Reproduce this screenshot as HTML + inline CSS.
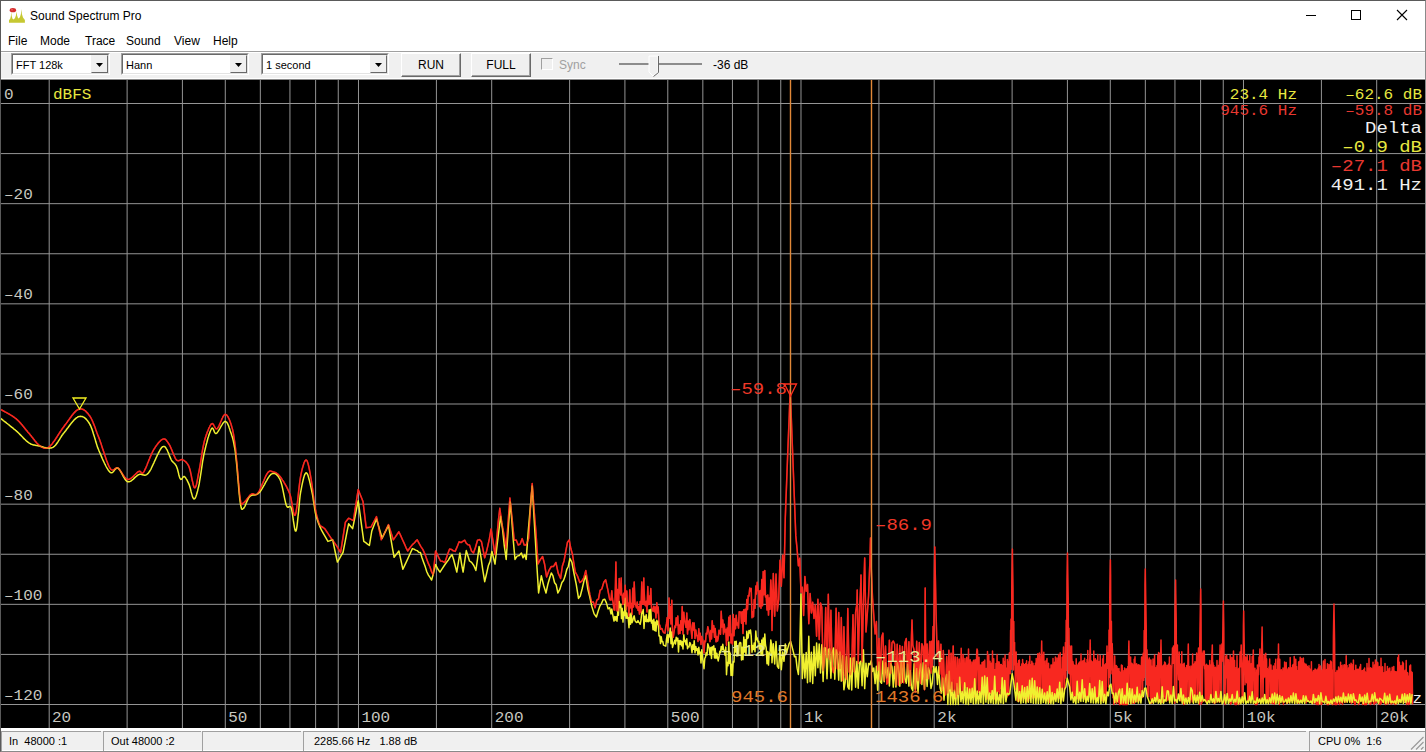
<!DOCTYPE html><html><head><meta charset="utf-8"><style>
*{margin:0;padding:0;box-sizing:border-box}
html,body{width:1426px;height:752px;overflow:hidden;background:#fff;font-family:"Liberation Sans",sans-serif;}
.abs{position:absolute}
.t{position:absolute;white-space:pre;font-size:12px;color:#000;line-height:14px}
.combo{position:absolute;background:#fff;border-top:1px solid #a0a0a0;border-left:1px solid #a0a0a0;border-right:1px solid #fff;border-bottom:1px solid #fff}
.combo .in{position:absolute;left:0;top:0;right:0;bottom:0;border-top:1px solid #696969;border-left:1px solid #696969;border-right:1px solid #e3e3e3;border-bottom:1px solid #e3e3e3}
.arrow{position:absolute;top:1px;bottom:1px;right:1px;width:17px;background:#f0f0f0;border-top:1px solid #f0f0f0;border-left:1px solid #f0f0f0;border-right:1px solid #696969;border-bottom:1px solid #696969}
.btn{position:absolute;background:#f0f0f0;border-top:1px solid #fff;border-left:1px solid #fff;border-right:1px solid #696969;border-bottom:1px solid #696969}
.btn .in{position:absolute;left:0;top:0;right:0;bottom:0;border-right:1px solid #a0a0a0;border-bottom:1px solid #a0a0a0;}
.pl{position:absolute;white-space:pre;font-family:"Liberation Mono",monospace;line-height:1}
</style></head><body>
<div class="abs" style="left:0;top:0;width:1426px;height:752px;border:1px solid #5a5a5a;border-right-color:#8a8a8a;border-bottom-color:#8a8a8a"></div>
<svg class="abs" style="left:0;top:0" width="30" height="30" viewBox="0 0 30 30">
<path d="M9 22.8V20.2L10.3 18.5L10.9 16L11.3 12L11.7 16L12.5 18.8L13.7 19.5L15 18L15.9 15.5L16.5 11.5L17.1 15.5L18 18L18.8 18.4L20 17L20.9 14L21.4 9L21.9 14L23 17.5L24.9 20V22.8Z" fill="#c6c832"/>
<ellipse cx="12.9" cy="10.2" rx="3.2" ry="2.1" fill="#d42c2c"/>
<ellipse cx="12" cy="9.8" rx="1.2" ry="0.8" fill="#ee5a5a"/>
</svg>
<div class="t" style="left:30px;top:9px;font-size:12px">Sound Spectrum Pro</div>
<div class="abs" style="left:1306px;top:15px;width:10px;height:1px;background:#000"></div>
<div class="abs" style="left:1351px;top:10px;width:10px;height:10px;border:1px solid #000"></div>
<svg class="abs" style="left:1396px;top:9px" width="12" height="12" viewBox="0 0 12 12"><path d="M1 1L11 11M11 1L1 11" stroke="#000" stroke-width="1.1"/></svg>
<div class="t" style="left:8px;top:34px">File</div>
<div class="t" style="left:40px;top:34px">Mode</div>
<div class="t" style="left:85px;top:34px">Trace</div>
<div class="t" style="left:126px;top:34px">Sound</div>
<div class="t" style="left:174px;top:34px">View</div>
<div class="t" style="left:213px;top:34px">Help</div>
<div class="abs" style="left:1px;top:51px;width:1424px;height:1px;background:#a0a0a0"></div>
<div class="abs" style="left:1px;top:52px;width:1424px;height:1px;background:#fff"></div>
<div class="abs" style="left:1px;top:53px;width:1424px;height:25px;background:#f0f0f0"></div>
<div class="abs" style="left:1px;top:78px;width:1424px;height:1px;background:#fff"></div>
<div class="abs" style="left:1px;top:79px;width:1424px;height:1px;background:#8a8a8a"></div>
<div class="combo" style="left:11px;top:53px;width:99px;height:22px"><div class="in"></div><div class="arrow"><svg style="position:absolute;left:4px;top:7px" width="8" height="5"><path d="M0 0H7L3.5 4Z" fill="#000"/></svg></div><div class="t" style="left:4px;top:4px;font-size:11px">FFT 128k</div></div>
<div class="combo" style="left:121px;top:53px;width:128px;height:22px"><div class="in"></div><div class="arrow"><svg style="position:absolute;left:4px;top:7px" width="8" height="5"><path d="M0 0H7L3.5 4Z" fill="#000"/></svg></div><div class="t" style="left:4px;top:4px;font-size:11px">Hann</div></div>
<div class="combo" style="left:261px;top:53px;width:128px;height:22px"><div class="in"></div><div class="arrow"><svg style="position:absolute;left:4px;top:7px" width="8" height="5"><path d="M0 0H7L3.5 4Z" fill="#000"/></svg></div><div class="t" style="left:4px;top:4px;font-size:11px">1 second</div></div>
<div class="btn" style="left:401px;top:53px;width:60px;height:24px"><div class="in"></div><div class="t" style="left:0;width:58px;text-align:center;top:4px">RUN</div></div>
<div class="btn" style="left:471px;top:53px;width:60px;height:24px"><div class="in"></div><div class="t" style="left:0;width:58px;text-align:center;top:4px">FULL</div></div>
<div class="abs" style="left:541px;top:58px;width:12px;height:12px;border-top:1px solid #a0a0a0;border-left:1px solid #a0a0a0;border-right:1px solid #fff;border-bottom:1px solid #fff;background:#f0f0f0"></div>
<div class="t" style="left:559px;top:58px;color:#a0a0a0">Sync</div>
<div class="abs" style="left:619px;top:63px;width:83px;height:2px;background:#8c8c8c"></div>
<svg class="abs" style="left:648px;top:55px" width="13" height="23" viewBox="0 0 13 23">
<path d="M1 1H10V17L5 21L1 17Z" fill="#f0f0f0" stroke="#fff"/>
<path d="M10.5 1V17.5L5.5 21.5" stroke="#696969" fill="none"/>
</svg>
<div class="t" style="left:713px;top:58px">-36 dB</div>
<svg width="1424" height="648" viewBox="1 80 1424 648" style="position:absolute;left:1px;top:80px;display:block">
<rect x="1" y="80" width="1424" height="648" fill="#000"/>
<path d="M49.20 80V728M127.12 80V728M182.41 80V728M225.29 80V728M260.33 80V728M289.95 80V728M315.61 80V728M338.25 80V728M358.49 80V728M436.41 80V728M491.70 80V728M569.62 80V728M624.91 80V728M667.79 80V728M702.83 80V728M732.45 80V728M758.11 80V728M780.75 80V728M800.99 80V728M878.91 80V728M934.20 80V728M1012.12 80V728M1067.41 80V728M1110.29 80V728M1145.33 80V728M1174.95 80V728M1200.61 80V728M1223.25 80V728M1243.49 80V728M1321.41 80V728M1376.70 80V728M1 103.50H1425M1 153.58H1425M1 203.67H1425M1 253.75H1425M1 303.83H1425M1 353.91H1425M1 404.00H1425M1 454.08H1425M1 504.16H1425M1 554.25H1425M1 604.33H1425M1 654.41H1425M1 704.50H1425" stroke="#949494" stroke-width="1" fill="none"/>
<text x="4" y="99" font-family="Liberation Mono, monospace" font-size="16" fill="#c8c8c0" transform="matrix(1 0 0 0.88 0 11.88)">0</text>
<text x="4" y="199" font-family="Liberation Mono, monospace" font-size="16" fill="#c8c8c0" transform="matrix(1 0 0 0.88 0 23.88)">&#8211;20</text>
<text x="4" y="299" font-family="Liberation Mono, monospace" font-size="16" fill="#c8c8c0" transform="matrix(1 0 0 0.88 0 35.88)">&#8211;40</text>
<text x="4" y="399" font-family="Liberation Mono, monospace" font-size="16" fill="#c8c8c0" transform="matrix(1 0 0 0.88 0 47.88)">&#8211;60</text>
<text x="4" y="500" font-family="Liberation Mono, monospace" font-size="16" fill="#c8c8c0" transform="matrix(1 0 0 0.88 0 60.00)">&#8211;80</text>
<text x="4" y="600" font-family="Liberation Mono, monospace" font-size="16" fill="#c8c8c0" transform="matrix(1 0 0 0.88 0 72.00)">&#8211;100</text>
<text x="4" y="700" font-family="Liberation Mono, monospace" font-size="16" fill="#c8c8c0" transform="matrix(1 0 0 0.88 0 84.00)">&#8211;120</text>
<text x="53" y="99" font-family="Liberation Mono, monospace" font-size="16" fill="#e8e840" transform="matrix(1 0 0 0.88 0 11.88)">dBFS</text>
<text x="52.0" y="722" font-family="Liberation Mono, monospace" font-size="16" fill="#c8c8c0" transform="matrix(1 0 0 0.88 0 86.64)">20</text>
<text x="228.2" y="722" font-family="Liberation Mono, monospace" font-size="16" fill="#c8c8c0" transform="matrix(1 0 0 0.88 0 86.64)">50</text>
<text x="361.4" y="722" font-family="Liberation Mono, monospace" font-size="16" fill="#c8c8c0" transform="matrix(1 0 0 0.88 0 86.64)">100</text>
<text x="494.7" y="722" font-family="Liberation Mono, monospace" font-size="16" fill="#c8c8c0" transform="matrix(1 0 0 0.88 0 86.64)">200</text>
<text x="670.8" y="722" font-family="Liberation Mono, monospace" font-size="16" fill="#c8c8c0" transform="matrix(1 0 0 0.88 0 86.64)">500</text>
<text x="804.1" y="722" font-family="Liberation Mono, monospace" font-size="16" fill="#c8c8c0" transform="matrix(1 0 0 0.88 0 86.64)">1k</text>
<text x="937.3" y="722" font-family="Liberation Mono, monospace" font-size="16" fill="#c8c8c0" transform="matrix(1 0 0 0.88 0 86.64)">2k</text>
<text x="1113.5" y="722" font-family="Liberation Mono, monospace" font-size="16" fill="#c8c8c0" transform="matrix(1 0 0 0.88 0 86.64)">5k</text>
<text x="1246.8" y="722" font-family="Liberation Mono, monospace" font-size="16" fill="#c8c8c0" transform="matrix(1 0 0 0.88 0 86.64)">10k</text>
<text x="1380.0" y="722" font-family="Liberation Mono, monospace" font-size="16" fill="#c8c8c0" transform="matrix(1 0 0 0.88 0 86.64)">20k</text>
<text x="1422" y="703" font-family="Liberation Mono, monospace" font-size="16" fill="#f0f0f0" text-anchor="end" transform="matrix(1 0 0 0.88 0 84.36)">Hz</text>
<path d="M0.0 409.1L0.3 409.3L0.6 409.4L0.9 409.6L1.3 409.8L1.6 410.0L2.1 410.2L2.5 410.5L3.0 410.7L3.4 411.0L3.9 411.2L4.4 411.5L5.0 411.8L5.5 412.1L6.1 412.4L6.6 412.7L7.2 413.0L7.8 413.3L8.4 413.7L9.0 414.0L9.5 414.3L10.1 414.7L10.7 415.0L11.3 415.4L11.9 415.7L12.4 416.1L13.0 416.5L13.5 416.8L14.0 417.2L14.6 417.6L15.1 418.0L15.5 418.3L16.0 418.7L16.6 419.2L17.1 419.7L17.7 420.2L18.2 420.7L18.8 421.3L19.3 421.8L19.8 422.4L20.4 423.0L20.9 423.6L21.4 424.2L21.9 424.7L22.4 425.3L22.9 426.0L23.4 426.6L23.9 427.2L24.4 427.8L24.9 428.4L25.3 429.0L25.8 429.6L26.3 430.2L26.8 430.7L27.3 431.3L27.7 431.9L28.2 432.5L28.7 433.0L29.2 433.6L29.8 434.3L30.3 434.9L30.8 435.6L31.4 436.3L31.9 436.9L32.4 437.6L33.0 438.3L33.5 438.9L34.0 439.6L34.5 440.2L35.0 440.9L35.5 441.5L36.0 442.1L36.5 442.7L37.0 443.2L37.5 443.7L38.0 444.2L38.5 444.7L38.9 445.1L39.4 445.5L39.9 445.8L40.4 446.2L41.0 446.5L41.5 446.8L41.9 447.1L42.4 447.4L42.9 447.6L43.4 447.9L43.8 448.0L44.3 448.2L44.7 448.3L45.2 448.3L45.7 448.3L46.2 448.3L46.7 448.2L47.2 448.0L47.7 447.8L48.3 447.4L48.9 447.1L49.5 446.6L49.9 446.2L50.4 445.8L50.8 445.3L51.3 444.8L51.8 444.3L52.3 443.7L52.7 443.0L53.2 442.3L53.7 441.6L54.3 440.9L54.8 440.2L55.3 439.4L55.8 438.6L56.4 437.8L56.9 437.0L57.4 436.1L58.0 435.3L58.5 434.5L59.0 433.6L59.6 432.8L60.1 432.0L60.6 431.2L61.2 430.4L61.7 429.6L62.2 428.8L62.8 428.1L63.3 427.4L63.8 426.7L64.3 426.0L64.8 425.3L65.4 424.6L65.9 423.9L66.4 423.2L66.9 422.4L67.5 421.7L68.0 420.9L68.5 420.2L69.1 419.4L69.6 418.7L70.1 417.9L70.7 417.2L71.2 416.5L71.7 415.8L72.2 415.1L72.8 414.5L73.3 413.8L73.8 413.2L74.3 412.6L74.8 412.1L75.3 411.6L75.8 411.1L76.3 410.7L76.8 410.3L77.3 410.0L77.7 409.7L78.2 409.5L78.8 409.3L79.3 409.1L79.9 409.0L80.5 409.0L81.0 409.0L81.5 409.0L82.1 409.1L82.6 409.3L83.1 409.5L83.6 409.7L84.1 410.0L84.6 410.4L85.1 410.7L85.6 411.1L86.1 411.6L86.6 412.1L87.0 412.6L87.5 413.1L88.0 413.7L88.5 414.3L88.9 414.9L89.4 415.5L89.9 416.3L90.5 417.1L91.0 418.0L91.5 419.0L92.0 420.0L92.5 421.1L93.0 422.2L93.4 423.4L93.9 424.6L94.4 425.8L94.9 427.1L95.4 428.4L95.8 429.7L96.3 431.0L96.8 432.4L97.3 433.7L97.8 435.1L98.4 436.5L98.9 437.9L99.4 439.1L99.9 440.5L100.4 441.9L100.9 443.3L101.4 444.9L101.9 446.4L102.4 448.0L102.9 449.6L103.5 451.2L104.0 452.8L104.5 454.4L105.1 456.0L105.6 457.6L106.1 459.1L106.6 460.5L107.2 461.9L107.7 463.2L108.1 464.4L108.6 465.5L109.1 466.6L109.6 467.4L110.0 468.2L110.6 469.0L111.1 469.6L111.7 469.9L112.2 470.1L112.7 470.1L113.2 469.9L113.6 469.7L114.1 469.4L114.5 469.1L115.0 468.7L115.5 468.4L116.0 468.1L116.4 467.9L116.9 467.9L117.5 467.9L118.0 468.2L118.5 468.6L118.9 469.0L119.4 469.5L119.9 470.2L120.4 470.8L120.9 471.6L121.4 472.3L121.9 473.1L122.4 473.9L122.9 474.7L123.4 475.5L124.0 476.2L124.5 476.9L125.0 477.5L125.5 478.1L126.1 478.6L126.6 479.0L127.2 479.2L127.7 479.4L128.2 479.4L128.7 479.4L129.2 479.2L129.7 479.0L130.3 478.7L130.8 478.4L131.3 478.0L131.9 477.5L132.5 477.1L133.0 476.6L133.6 476.1L134.1 475.5L134.6 475.0L135.2 474.5L135.7 474.0L136.2 473.5L136.7 473.0L137.1 472.6L137.6 472.2L138.0 471.9L138.4 471.6L138.8 471.4L139.6 471.2L140.2 471.4L140.7 471.8L141.1 472.4L141.5 472.9L141.9 473.3L142.3 473.4L142.9 473.0L143.6 472.2L144.0 471.6L144.4 470.8L144.8 469.9L145.3 468.9L145.8 467.9L146.3 466.7L146.8 465.5L147.3 464.2L147.8 462.8L148.4 461.5L148.9 460.1L149.5 458.8L150.0 457.4L150.6 456.1L151.1 454.9L151.6 453.7L152.2 452.6L152.7 451.5L153.2 450.6L153.7 449.7L154.2 448.9L154.8 448.0L155.3 447.2L155.8 446.4L156.3 445.7L156.9 444.9L157.4 444.2L157.9 443.5L158.5 442.9L159.0 442.2L159.5 441.7L160.0 441.2L160.5 440.7L161.0 440.2L161.5 439.9L161.9 439.6L162.4 439.3L162.8 439.1L163.4 438.9L164.0 438.9L164.6 439.0L165.1 439.2L165.6 439.6L166.1 440.0L166.6 440.6L167.0 441.2L167.5 441.9L168.0 442.6L168.6 443.5L169.1 444.3L169.6 445.1L170.1 446.1L170.6 447.2L171.1 448.4L171.7 449.7L172.2 451.0L172.7 452.4L173.3 453.7L173.8 455.0L174.4 456.2L174.9 457.3L175.4 458.3L175.9 459.1L176.4 459.8L177.0 460.3L177.5 460.6L178.1 460.7L178.6 460.7L179.1 460.5L179.7 460.3L180.2 460.1L180.7 459.8L181.2 459.7L181.7 459.6L182.3 459.6L182.8 459.8L183.3 460.1L183.9 460.4L184.4 460.8L184.9 461.2L185.5 461.6L186.0 462.1L186.5 462.7L187.1 463.3L187.6 464.1L188.1 464.9L188.6 465.9L189.1 467.0L189.6 468.5L190.2 470.5L190.7 472.8L191.2 475.2L191.7 477.8L192.2 480.3L192.8 482.6L193.2 484.6L193.7 486.3L194.2 487.4L194.7 487.8L195.3 487.5L195.8 486.4L196.4 484.7L196.9 482.4L197.4 479.9L197.9 477.1L198.4 474.2L199.0 471.3L199.5 468.6L200.0 465.9L200.5 462.9L201.0 459.8L201.5 456.6L202.0 453.3L202.5 450.1L203.1 447.0L203.7 444.1L204.3 441.5L204.7 439.9L205.2 438.3L205.7 436.7L206.2 435.1L206.8 433.6L207.3 432.1L207.9 430.7L208.4 429.4L208.9 428.1L209.5 427.0L210.0 426.0L210.5 425.2L211.0 424.4L211.5 423.9L212.1 423.6L212.6 423.7L213.1 424.1L213.6 424.8L214.0 425.6L214.5 426.5L215.0 427.4L215.5 428.2L216.0 428.7L216.5 428.9L217.1 428.7L217.6 428.2L218.0 427.6L218.6 426.7L219.1 425.6L219.6 424.4L220.2 423.1L220.7 421.8L221.3 420.5L221.8 419.2L222.4 418.0L222.9 416.9L223.5 415.9L224.0 415.2L224.5 414.7L225.0 414.4L225.6 414.4L226.2 414.6L226.8 415.1L227.3 415.8L227.9 416.7L228.4 417.7L229.0 418.8L229.5 420.0L230.0 421.3L230.5 422.7L231.0 424.1L231.4 425.5L232.0 427.6L232.6 429.6L233.0 431.8L233.5 434.2L233.9 436.9L234.4 440.0L234.9 443.7L235.4 447.9L235.9 452.6L236.4 458.2L237.0 464.5L237.6 471.2L238.1 477.9L238.7 484.3L239.2 490.2L239.7 495.1L240.2 498.9L240.8 502.4L241.2 504.2L241.6 504.6L242.0 504.3L242.6 503.5L243.4 502.9L243.8 502.7L244.2 502.4L244.6 501.9L245.1 501.4L245.6 500.8L246.1 500.2L246.7 499.5L247.2 498.8L247.8 498.1L248.3 497.4L248.9 496.7L249.4 496.0L249.9 495.4L250.4 494.9L250.9 494.5L251.4 494.1L252.0 493.8L252.5 493.7L253.0 493.8L253.5 493.9L254.0 494.2L254.5 494.4L255.0 494.6L255.5 494.7L256.0 494.7L256.6 494.4L257.2 494.0L257.8 493.3L258.2 492.7L258.7 491.9L259.2 491.0L259.7 490.0L260.2 489.0L260.7 487.8L261.2 486.6L261.8 485.3L262.3 484.0L262.9 482.8L263.4 481.5L264.0 480.2L264.5 479.0L265.0 477.8L265.5 476.7L266.0 475.7L266.4 474.8L266.9 474.0L267.3 473.4L267.9 472.5L268.5 471.9L269.1 471.5L269.6 471.2L270.0 471.1L270.5 471.1L270.9 471.1L271.4 471.3L271.8 471.5L272.3 471.6L272.9 471.8L273.4 471.9L273.8 472.0L274.3 472.2L274.8 472.4L275.3 472.5L275.8 472.8L276.3 473.0L276.8 473.4L277.3 473.7L277.8 474.2L278.4 474.7L278.9 475.2L279.5 475.9L280.1 476.6L280.6 477.2L281.0 477.8L281.5 478.5L282.0 479.3L282.5 480.1L283.1 480.9L283.6 481.7L284.1 482.6L284.7 483.5L285.2 484.5L285.8 485.4L286.3 486.4L286.8 487.4L287.3 488.4L287.8 489.4L288.3 490.4L288.8 491.5L289.2 492.5L289.6 493.5L290.3 495.5L290.9 497.9L291.4 500.7L291.9 503.5L292.4 506.4L292.9 509.1L293.3 511.4L293.8 513.4L294.2 514.7L294.7 515.3L295.2 515.0L295.7 513.6L296.2 511.3L296.7 508.1L297.2 504.3L297.7 500.1L298.2 495.6L298.7 491.0L299.2 486.6L299.7 482.5L300.2 478.9L300.7 476.0L301.2 473.5L301.7 471.2L302.2 469.0L302.8 467.0L303.3 465.2L303.8 463.6L304.3 462.3L304.8 461.2L305.3 460.5L305.8 460.0L306.3 460.0L306.9 460.5L307.4 461.7L308.0 463.4L308.5 465.5L309.1 468.0L309.6 470.7L310.1 473.5L310.6 476.4L311.1 479.1L311.6 482.3L312.1 485.9L312.6 489.7L313.1 493.6L313.6 497.5L314.1 501.3L314.6 504.8L315.1 507.9L315.6 510.4L316.1 512.8L316.6 515.1L317.2 517.2L317.7 519.2L318.3 521.0L318.8 522.7L319.4 524.1L319.9 525.4L321.5 526.5L323.1 527.5L324.7 528.6L326.3 531.0L327.9 533.4L329.5 535.8L331.1 538.2L333.5 541.4L335.8 544.6L337.4 547.2L339.0 549.9L340.6 552.5L343.0 537.4L345.4 522.2L347.0 520.2L348.6 518.2L351.0 519.4L353.4 520.6L355.0 510.2L356.6 499.9L358.2 489.5L359.8 493.5L361.4 497.5L363.0 501.5L366.2 527.8L367.8 527.5L369.4 527.3L371.0 527.0L372.8 523.5L374.7 520.1L376.5 516.6L378.1 524.3L379.7 532.1L381.3 539.8L383.1 536.0L384.9 532.2L386.7 528.4L388.5 524.6L390.1 529.7L391.7 534.7L393.3 539.8L395.2 537.1L397.0 534.5L398.9 531.8L400.7 535.6L402.4 539.5L404.2 543.4L405.9 547.3L407.7 551.0L410.0 547.7L412.4 544.6L414.0 543.2L415.6 541.4L417.2 539.8L419.1 543.4L420.9 546.6L422.8 549.4L424.7 553.6L426.5 558.4L428.4 563.7L430.0 567.0L431.6 572.0L433.2 574.9L435.6 551.0L437.2 554.2L438.9 557.9L440.5 561.0L442.6 561.3L444.8 562.5L446.4 558.0L448.0 553.2L449.6 549.0L451.5 549.4L453.3 550.8L455.2 551.4L457.1 546.9L459.1 541.8L461.0 542.6L462.8 541.3L464.7 540.2L466.3 543.3L467.9 544.7L469.5 545.0L471.5 550.9L473.5 553.0L475.5 547.3L477.5 540.2L479.5 539.6L481.5 541.8L484.7 557.8L486.3 552.3L487.9 545.6L489.5 538.2L491.1 529.0L493.1 542.1L495.0 554.6L496.6 540.3L498.2 522.2L499.8 508.3L501.8 522.9L503.8 533.8L506.2 548.2L508.0 523.5L509.9 497.9L512.0 517.8L514.2 540.2L516.2 539.9L518.2 545.0L520.2 544.1L522.2 538.6L524.2 545.1L526.2 545.0L528.6 538.6L530.4 508.2L532.2 483.6L534.1 510.4L536.0 533.0L538.0 564.0L540.3 559.6L542.6 556.5L544.6 564.3L546.6 577.0L549.0 570.3L551.3 566.5L553.6 566.4L555.9 562.5L558.2 573.1L560.6 578.5L562.4 566.0L564.1 560.7L565.9 550.6L567.5 542.1L569.2 540.0L570.9 548.8L572.5 554.5L575.2 571.8L577.5 576.0L579.8 582.5L581.8 581.2L583.8 577.9L585.8 570.5L587.8 582.5L589.8 594.4L591.6 602.3L593.3 601.9L595.1 607.7L596.8 600.1L598.5 599.0L600.1 590.4L601.8 589.0L603.8 582.3L605.7 579.8L607.7 589.1L609.7 599.7L611.0 600.1L611.8 590.7L612.5 599.0L613.2 603.1L614.0 609.7L614.8 610.0L615.5 582.0L615.9 562.0L616.2 579.5L617.0 611.0L617.8 589.4L618.5 611.1L619.2 578.4L620.0 591.4L620.8 594.9L621.2 578.0L621.5 593.0L622.2 595.4L623.0 604.4L623.8 593.2L624.5 603.1L625.2 585.3L626.0 609.5L626.8 591.0L627.5 605.7L628.2 603.3L629.0 616.3L629.8 589.8L630.5 607.7L631.2 603.6L632.0 614.3L632.8 588.3L633.5 606.9L634.2 582.1L635.0 603.2L635.8 605.4L636.5 607.8L637.2 602.1L638.0 610.3L638.8 606.7L639.5 614.1L640.2 601.4L641.0 612.2L641.8 582.1L642.5 603.4L643.2 604.2L643.8 578.0L644.0 588.0L644.8 604.6L645.5 605.6L646.2 601.2L647.0 612.0L647.8 586.6L648.5 604.4L649.2 596.1L650.0 603.7L650.8 588.5L651.5 607.3L652.2 609.9L653.0 611.2L653.8 606.2L654.5 611.7L655.2 607.0L656.0 617.9L656.8 602.8L657.5 612.8L658.2 607.1L659.0 624.9L659.8 625.2L660.5 629.2L661.2 628.6L662.0 628.8L662.8 631.2L663.5 632.5L664.2 632.8L665.0 633.2L665.8 627.0L666.5 623.7L667.2 617.5L668.0 630.7L668.8 609.6L669.0 598.0L669.5 618.3L670.2 606.6L671.0 624.0L671.8 600.2L672.5 633.2L673.2 637.3L674.0 632.3L674.8 626.1L675.5 627.4L676.2 617.7L677.0 625.0L677.8 616.1L678.5 633.9L679.2 625.1L680.0 633.5L680.8 620.7L681.5 630.1L682.2 606.5L683.0 633.9L683.8 612.2L684.5 620.3L685.2 622.6L686.0 627.3L686.8 613.0L687.5 634.1L688.2 621.0L689.0 629.8L689.8 619.6L690.5 624.4L691.2 630.4L692.0 638.3L692.8 622.8L693.5 630.0L694.2 623.0L695.0 638.4L695.8 629.9L696.5 635.6L697.2 635.6L698.0 641.5L698.8 628.8L699.5 639.8L700.2 633.3L701.0 644.5L701.8 636.6L702.5 639.4L703.2 642.1L704.0 653.0L704.8 641.0L705.5 641.8L706.2 633.3L707.0 634.0L707.8 626.7L708.5 630.0L709.2 633.1L710.0 641.6L710.8 630.6L711.5 638.9L712.2 620.7L713.0 632.0L713.8 625.7L714.5 637.2L715.2 628.5L716.0 641.8L716.8 636.6L717.5 641.1L718.2 638.4L719.0 630.2L719.8 632.5L720.5 634.3L721.2 611.3L722.0 627.1L722.8 620.1L723.5 634.1L724.2 624.2L725.0 631.9L725.8 629.4L726.5 645.3L727.2 628.0L728.0 640.2L728.8 617.2L729.5 635.6L730.2 615.6L731.0 643.0L731.8 634.2L732.5 644.1L733.2 614.5L734.0 635.7L734.8 618.8L735.5 628.8L736.2 615.2L737.0 624.9L737.8 623.0L738.5 628.1L739.2 611.8L740.0 611.9L740.8 612.3L741.5 623.3L742.2 611.5L743.0 633.5L743.8 609.8L744.5 621.2L745.2 609.3L746.0 623.9L746.8 599.5L747.5 609.5L748.2 595.6L749.0 595.9L749.8 587.9L750.5 590.9L751.2 588.5L752.0 617.7L752.8 611.7L753.5 616.8L754.2 599.6L755.0 608.2L755.8 586.1L756.5 593.9L757.2 582.3L758.0 590.7L758.8 591.2L759.5 606.6L760.2 590.6L761.0 608.3L761.8 579.6L762.5 605.8L763.2 571.5L764.0 594.8L764.8 570.6L765.5 596.9L766.2 595.6L767.0 609.9L767.8 595.1L768.5 615.1L769.2 598.1L770.0 609.2L770.8 580.0L771.5 592.2L772.0 630.6L773.3 573.4L774.7 616.3L776.0 574.0L777.3 611.0L778.7 599.3L780.0 560.3L781.3 586.3L782.7 555.3L784.0 577.8L785.3 517.4L786.6 483.1L787.9 448.8L789.3 414.6L790.2 390.0L790.6 399.6L791.9 433.7L793.2 467.8L794.5 501.9L795.8 535.9L797.1 549.2L798.4 565.8L799.7 558.3L801.0 592.1L802.3 587.2L803.6 615.5L804.9 576.5L806.2 591.2L807.5 584.5L808.8 623.8L810.1 593.6L811.4 612.9L812.7 602.2L814.0 618.4L815.3 605.1L816.6 636.3L817.9 599.3L819.2 639.6L820.5 602.9L821.8 607.5L823.1 670.7L824.4 659.2L825.7 607.4L827.0 657.4L828.3 594.3L829.6 659.2L830.9 610.3L832.2 666.3L833.5 672.5L834.8 665.4L836.1 608.3L837.4 668.7L838.7 612.6L840.0 668.7L841.3 617.4L842.6 680.4L843.9 626.8L845.2 675.3L846.5 678.9L847.8 608.4L849.1 671.6L850.4 674.8L851.7 668.3L853.0 614.7L854.3 671.7L855.6 612.4L856.9 603.9L857.2 590.0L858.2 663.4L859.5 610.8L860.8 583.9L861.0 575.0L862.1 661.7L863.4 602.5L864.7 558.0L864.7 559.1L866.0 631.9L867.3 613.7L868.6 595.5L869.9 561.1L870.5 538.0L871.2 566.9L872.5 597.5L873.8 615.7L875.1 633.9L876.4 621.5L877.7 670.3L879.0 638.4L880.3 680.0L881.6 637.3L882.9 633.1L884.2 680.5L885.5 646.0L886.8 684.1L888.1 682.3L889.4 640.3L890.7 673.2L892.0 642.6L893.3 641.0L894.6 644.0L895.9 685.2L897.2 644.3L898.5 685.0L899.8 645.6L901.1 683.3L902.4 646.5L903.7 682.7L905.0 642.7L906.3 638.5L907.6 674.9L908.9 641.7L910.2 685.4L911.5 635.8L912.0 620.0L912.8 645.3L914.1 650.0L915.4 692.2L916.7 641.3L918.0 680.8L919.3 642.6L920.6 683.5L921.9 643.7L923.2 647.1L924.5 689.7L925.2 588.0L925.8 678.7L927.1 643.9L928.4 678.6L929.7 641.6L931.0 672.9L931.4 641.2L932.3 666.8L933.1 626.6L933.6 658.2L934.8 547.0L934.8 549.7L936.1 615.1L937.2 657.0L937.3 643.1L938.1 651.0L938.5 640.9L939.7 674.3L940.9 644.3L942.1 690.3L943.3 650.6L944.4 682.9L945.6 694.8L946.7 656.4L947.8 693.1L948.9 650.3L950.0 689.0L951.1 653.2L952.1 691.5L953.2 646.0L954.2 690.7L955.2 656.9L956.3 697.1L957.3 657.6L958.3 694.5L959.2 659.1L960.2 689.7L961.2 648.2L962.1 693.2L963.1 654.6L964.0 694.4L964.9 658.5L965.8 688.1L966.7 657.3L967.6 694.7L968.5 649.1L969.3 698.0L970.2 659.8L971.0 695.6L971.9 662.0L972.7 697.4L973.5 660.2L974.3 696.8L975.1 659.7L975.9 692.5L976.7 652.1L977.0 649.0L977.5 650.8L978.3 692.4L979.0 657.2L979.8 698.3L980.5 664.9L981.2 697.5L982.0 662.6L982.7 694.3L983.4 661.6L984.1 694.8L984.8 660.0L985.5 696.7L986.1 668.5L986.8 699.2L987.5 651.4L988.1 697.9L988.8 655.2L989.4 693.8L990.0 661.3L990.7 693.4L991.3 663.2L991.9 695.8L992.5 651.1L993.1 697.8L993.7 658.8L994.3 699.1L994.8 669.8L995.4 696.7L996.0 663.6L996.5 691.4L997.1 654.4L997.6 695.6L998.2 661.7L998.7 691.6L999.2 662.0L999.7 695.6L1000.3 664.5L1000.8 688.6L1001.3 664.6L1001.8 697.8L1002.3 665.7L1002.8 693.3L1003.2 658.2L1003.7 694.6L1004.2 662.0L1004.6 693.3L1005.1 655.1L1005.6 695.2L1006.0 694.9L1006.5 667.9L1006.9 697.0L1007.3 659.5L1007.8 693.2L1008.2 662.3L1008.6 695.6L1009.0 663.1L1009.3 653.0L1009.4 659.8L1009.8 652.6L1010.2 673.8L1010.6 630.2L1010.8 646.0L1011.0 619.0L1011.4 669.2L1011.8 582.4L1012.2 558.4L1012.4 549.0L1012.6 563.6L1013.0 587.6L1013.4 670.0L1013.8 621.4L1014.2 664.8L1014.6 642.6L1014.6 649.2L1015.0 655.0L1015.4 689.3L1015.8 665.0L1016.2 652.0L1016.2 654.2L1016.6 674.2L1017.0 663.3L1017.4 700.9L1017.8 673.1L1018.2 701.1L1018.6 660.8L1019.0 699.4L1019.4 660.1L1019.8 701.0L1020.2 667.1L1020.6 696.2L1021.0 666.5L1021.4 700.5L1021.8 664.1L1022.2 697.7L1022.6 659.6L1023.0 697.6L1023.4 663.4L1023.8 697.6L1024.2 664.7L1024.6 698.2L1025.0 664.6L1025.4 692.6L1025.8 663.5L1026.2 692.5L1026.6 660.7L1027.0 701.7L1027.4 666.8L1027.8 700.2L1028.2 664.6L1028.6 700.8L1029.0 661.7L1029.4 698.1L1029.8 656.0L1030.2 698.4L1030.6 670.3L1031.0 664.8L1031.4 696.6L1031.8 661.2L1032.2 665.7L1032.6 698.0L1033.0 663.2L1033.4 698.0L1033.8 666.5L1034.2 697.5L1034.6 666.1L1035.0 695.8L1035.4 663.2L1035.8 693.2L1036.2 658.4L1036.6 695.9L1037.0 660.8L1037.4 695.5L1037.8 653.8L1038.2 697.1L1038.6 661.1L1039.0 692.9L1039.4 653.0L1039.8 693.1L1040.2 660.5L1040.6 697.7L1041.0 656.7L1041.4 653.8L1041.7 641.0L1041.8 648.2L1042.2 662.1L1042.6 696.3L1043.0 655.4L1043.4 697.8L1043.8 652.2L1044.2 696.1L1044.6 661.2L1045.0 696.1L1045.4 666.3L1045.8 697.3L1046.2 660.6L1046.6 696.9L1047.0 658.5L1047.4 696.3L1047.8 671.1L1048.2 701.4L1048.6 663.2L1049.0 700.7L1049.4 669.0L1049.8 702.6L1050.2 669.5L1050.6 702.2L1051.0 664.9L1051.4 699.5L1051.8 664.9L1052.2 699.8L1052.6 696.9L1053.0 658.6L1053.4 699.5L1053.8 667.5L1054.2 698.2L1054.6 662.3L1055.0 697.5L1055.4 657.1L1055.8 699.8L1056.2 666.4L1056.6 696.9L1057.0 657.9L1057.4 697.3L1057.8 662.6L1058.2 698.2L1058.6 654.5L1059.0 698.6L1059.4 668.4L1059.8 697.4L1060.2 652.7L1060.6 699.0L1061.0 699.4L1061.4 668.9L1061.8 699.9L1062.2 657.2L1062.6 697.0L1063.0 662.2L1063.4 649.8L1063.5 647.0L1063.8 664.2L1064.2 662.9L1064.6 689.4L1065.0 653.8L1065.3 657.0L1065.4 642.6L1065.8 677.9L1066.2 620.2L1066.6 670.2L1067.0 580.4L1067.4 556.4L1067.5 553.0L1067.8 573.6L1068.2 597.6L1068.6 673.0L1069.0 628.2L1069.4 673.8L1069.8 650.6L1070.0 646.0L1070.2 654.8L1070.6 692.3L1071.0 660.8L1071.4 653.8L1071.6 646.0L1071.8 658.2L1072.2 662.5L1072.6 698.2L1073.0 661.8L1073.4 695.8L1073.8 664.6L1074.2 692.3L1074.6 666.5L1075.0 701.3L1075.4 665.6L1075.8 699.0L1076.2 658.7L1076.6 698.2L1077.0 668.4L1077.4 698.6L1077.8 664.9L1078.2 698.7L1078.6 663.5L1079.0 700.2L1079.4 662.3L1079.8 696.1L1080.2 661.7L1080.6 698.6L1081.0 654.1L1081.4 697.5L1081.8 662.6L1082.2 698.1L1082.6 661.0L1083.0 696.4L1083.4 664.2L1083.8 660.4L1084.2 696.2L1084.6 658.3L1085.0 699.2L1085.4 663.0L1085.8 694.8L1086.2 663.9L1086.6 696.6L1087.0 659.4L1087.4 696.1L1087.8 650.4L1088.2 695.5L1088.6 664.3L1089.0 697.0L1089.4 662.5L1089.8 657.8L1090.2 640.0L1090.2 642.2L1090.6 660.8L1091.0 696.4L1091.4 660.9L1091.8 699.0L1092.2 662.2L1092.6 697.9L1093.0 661.8L1093.4 699.3L1093.8 650.9L1094.2 699.2L1094.6 665.3L1095.0 697.4L1095.4 658.8L1095.8 696.5L1096.2 660.3L1096.6 696.9L1097.0 663.9L1097.4 699.7L1097.8 654.5L1098.2 699.8L1098.6 661.9L1099.0 696.2L1099.4 661.5L1099.8 696.1L1100.2 655.5L1100.6 699.3L1101.0 666.9L1101.4 700.2L1101.8 669.3L1102.2 698.6L1102.6 659.0L1103.0 701.0L1103.4 655.6L1103.8 699.9L1104.2 664.8L1104.6 698.8L1105.0 664.9L1105.4 701.7L1105.8 663.7L1106.2 697.2L1106.6 663.8L1107.0 646.0L1107.0 648.2L1107.4 668.2L1107.8 658.8L1107.9 656.0L1108.2 652.4L1108.6 687.1L1109.0 630.0L1109.4 677.5L1109.8 593.4L1110.2 569.4L1110.4 560.0L1110.6 574.6L1111.0 673.7L1111.4 621.2L1111.8 669.8L1112.2 643.6L1112.3 647.0L1112.6 654.8L1113.0 697.8L1113.4 670.6L1113.8 704.5L1114.2 670.6L1114.6 658.8L1114.7 656.0L1115.0 673.2L1115.4 669.1L1115.8 702.2L1116.2 665.6L1116.6 703.5L1117.0 666.6L1117.4 701.0L1117.8 668.7L1118.2 699.0L1118.6 702.2L1119.0 668.5L1119.4 704.5L1119.8 671.9L1120.2 704.5L1120.6 672.5L1121.0 704.3L1121.4 664.9L1121.8 702.2L1122.2 665.5L1122.6 704.5L1123.0 675.1L1123.4 704.5L1123.8 670.7L1124.2 704.5L1124.6 668.0L1125.0 704.5L1125.4 671.3L1125.8 704.5L1126.2 668.7L1126.6 704.5L1127.0 670.2L1127.4 704.5L1127.8 666.4L1128.2 702.5L1128.6 653.8L1128.9 641.0L1129.0 648.2L1129.4 668.2L1129.8 658.3L1130.2 701.8L1130.6 656.9L1131.0 700.8L1131.4 700.1L1131.8 663.2L1132.2 703.2L1132.6 664.2L1133.0 701.0L1133.4 666.1L1133.8 703.2L1134.2 659.3L1134.6 703.2L1135.0 656.8L1135.4 701.5L1135.8 665.5L1136.2 699.7L1136.6 663.7L1137.0 701.4L1137.4 665.8L1137.8 701.1L1138.2 664.7L1138.6 699.0L1139.0 665.0L1139.4 700.2L1139.8 665.5L1140.2 700.3L1140.6 701.3L1141.0 668.1L1141.4 664.8L1141.6 657.0L1141.8 669.2L1142.2 662.4L1142.6 697.3L1143.0 656.3L1143.3 653.0L1143.4 653.0L1143.8 680.2L1144.2 630.6L1144.6 677.2L1145.0 584.4L1145.3 569.0L1145.4 577.6L1145.8 601.6L1146.2 625.6L1146.6 684.7L1147.0 649.8L1147.2 657.0L1147.4 659.3L1147.8 696.8L1148.2 660.3L1148.6 696.7L1149.0 662.9L1149.3 658.0L1149.4 665.2L1149.8 685.2L1150.2 659.9L1150.6 698.9L1151.0 659.9L1151.4 703.2L1151.8 666.2L1152.2 702.3L1152.6 701.6L1153.0 658.9L1153.4 698.3L1153.8 665.3L1154.2 699.2L1154.6 654.9L1155.0 700.3L1155.4 668.9L1155.8 700.1L1156.2 667.6L1156.6 699.6L1157.0 665.5L1157.4 700.9L1157.8 655.3L1158.2 696.6L1158.6 652.5L1159.0 699.0L1159.4 653.6L1159.8 699.4L1160.2 663.6L1160.6 657.8L1161.0 640.0L1161.0 642.2L1161.4 662.2L1161.8 702.5L1162.2 666.2L1162.6 702.0L1163.0 666.0L1163.4 696.8L1163.8 664.9L1164.2 696.5L1164.6 662.0L1165.0 698.4L1165.4 663.1L1165.8 699.8L1166.2 668.1L1166.6 700.9L1167.0 665.3L1167.4 700.0L1167.8 665.7L1168.2 699.9L1168.6 664.1L1169.0 699.0L1169.4 657.1L1169.8 700.3L1170.2 665.3L1170.6 699.7L1171.0 666.5L1171.4 701.2L1171.8 669.2L1172.2 660.8L1172.5 648.0L1172.6 655.2L1173.0 663.2L1173.4 648.8L1173.5 646.0L1173.8 663.2L1174.2 650.0L1174.6 703.2L1175.0 613.4L1175.4 589.4L1175.6 580.0L1175.8 594.6L1176.2 618.6L1176.6 701.9L1177.0 652.4L1177.4 645.0L1177.4 647.2L1177.8 667.2L1178.2 671.1L1178.6 679.8L1179.0 659.8L1179.2 652.0L1179.4 660.7L1179.8 698.8L1180.2 664.0L1180.6 700.7L1181.0 668.8L1181.4 699.1L1181.8 651.8L1182.2 701.3L1182.6 664.7L1183.0 702.5L1183.4 664.3L1183.8 704.5L1184.2 663.2L1184.6 704.1L1185.0 671.1L1185.4 699.5L1185.8 667.8L1186.2 700.9L1186.6 665.4L1187.0 698.9L1187.4 669.1L1187.8 666.8L1188.2 646.8L1188.3 644.0L1188.6 661.2L1189.0 701.2L1189.4 666.4L1189.8 703.0L1190.2 670.2L1190.6 700.1L1191.0 666.1L1191.4 698.8L1191.8 667.5L1192.2 702.0L1192.6 654.0L1193.0 700.9L1193.4 667.8L1193.8 697.7L1194.2 664.0L1194.6 699.1L1195.0 661.7L1195.4 698.6L1195.8 666.0L1196.2 675.8L1196.6 655.8L1196.7 653.0L1197.0 663.2L1197.4 700.4L1197.8 672.8L1198.2 660.8L1198.5 648.0L1198.6 655.2L1199.0 667.4L1199.4 704.5L1199.8 640.4L1200.2 616.4L1200.6 592.4L1200.7 589.0L1201.0 609.6L1201.4 704.2L1201.8 653.0L1202.2 702.2L1202.6 668.0L1203.0 658.8L1203.2 651.0L1203.4 663.2L1203.8 665.1L1204.2 653.8L1204.3 651.0L1204.6 668.2L1205.0 669.6L1205.4 701.7L1205.8 665.3L1206.2 701.5L1206.6 664.3L1207.0 666.2L1207.4 700.9L1207.8 667.3L1208.2 665.5L1208.6 698.9L1209.0 667.1L1209.4 696.1L1209.8 660.6L1210.2 699.4L1210.6 667.7L1211.0 665.1L1211.4 700.3L1211.8 656.2L1212.2 647.8L1212.3 645.0L1212.6 662.2L1213.0 662.8L1213.4 702.1L1213.8 665.4L1214.2 703.4L1214.6 668.5L1215.0 703.0L1215.4 667.3L1215.8 702.5L1216.2 675.3L1216.6 700.2L1217.0 660.4L1217.4 699.2L1217.8 669.6L1218.2 700.9L1218.6 665.6L1219.0 702.0L1219.4 662.2L1219.8 657.8L1220.1 645.0L1220.2 652.2L1220.6 666.7L1221.0 701.5L1221.4 664.1L1221.8 646.8L1221.9 644.0L1222.2 661.2L1222.6 646.4L1223.0 622.4L1223.4 601.0L1223.4 603.6L1223.8 627.6L1224.2 700.0L1224.6 667.4L1225.0 704.5L1225.4 670.9L1225.8 656.0L1225.8 658.2L1226.2 677.8L1226.6 657.8L1226.7 655.0L1227.0 668.2L1227.4 696.9L1227.8 659.4L1228.2 700.0L1228.6 660.0L1229.0 701.5L1229.4 667.7L1229.8 702.8L1230.2 655.2L1230.6 704.2L1231.0 667.5L1231.4 703.3L1231.8 657.4L1232.2 672.7L1232.6 698.9L1233.0 667.6L1233.4 653.8L1233.5 651.0L1233.8 666.4L1234.2 702.6L1234.6 660.5L1235.0 704.4L1235.4 672.8L1235.8 704.5L1236.2 667.6L1236.6 704.5L1237.0 655.7L1237.4 702.6L1237.8 702.5L1238.2 669.2L1238.6 704.5L1239.0 668.2L1239.4 703.0L1239.8 664.8L1240.1 652.0L1240.2 659.2L1240.6 666.8L1241.0 652.8L1241.2 645.0L1241.4 657.2L1241.8 664.5L1242.2 698.0L1242.6 665.8L1243.0 702.3L1243.4 626.4L1243.7 611.0L1243.8 619.6L1244.2 643.6L1244.6 667.6L1245.0 684.8L1245.4 664.8L1245.6 657.0L1245.8 669.2L1246.2 667.5L1246.6 682.8L1247.0 662.8L1247.2 655.0L1247.4 667.2L1247.8 701.7L1248.2 661.0L1248.6 700.9L1249.0 665.8L1249.4 698.9L1249.8 655.4L1250.2 694.8L1250.6 667.8L1251.0 699.0L1251.4 663.4L1251.8 698.0L1252.2 656.6L1252.6 699.0L1253.0 662.8L1253.3 650.0L1253.4 657.2L1253.8 677.2L1254.2 671.7L1254.6 700.9L1255.0 668.2L1255.4 704.5L1255.8 673.0L1256.2 704.5L1256.6 670.1L1257.0 704.5L1257.4 665.1L1257.8 702.9L1258.2 666.2L1258.6 674.8L1259.0 657.0L1259.0 659.2L1259.4 660.0L1259.8 651.8L1259.9 649.0L1260.2 666.2L1260.6 666.4L1261.0 701.1L1261.4 661.8L1261.8 642.4L1262.1 627.0L1262.2 635.6L1262.6 659.6L1263.0 702.0L1263.4 662.4L1263.8 677.8L1264.2 657.8L1264.3 655.0L1264.6 672.2L1265.0 676.8L1265.4 656.8L1265.5 654.0L1265.8 653.4L1266.2 702.4L1266.6 659.1L1267.0 702.0L1267.4 668.5L1267.8 696.6L1268.2 670.4L1268.6 703.6L1269.0 666.9L1269.4 671.8L1269.7 659.0L1269.8 666.2L1270.2 667.6L1270.6 702.7L1271.0 665.0L1271.4 703.0L1271.8 670.6L1272.2 702.9L1272.6 670.5L1273.0 703.7L1273.4 665.9L1273.8 702.0L1274.2 670.3L1274.6 704.0L1275.0 663.4L1275.4 702.3L1275.8 659.2L1276.2 702.5L1276.6 669.6L1277.0 670.8L1277.4 699.2L1277.8 658.8L1278.2 659.4L1278.5 644.0L1278.6 652.6L1279.0 668.6L1279.4 704.5L1279.8 659.2L1280.2 701.2L1280.6 671.7L1281.0 701.1L1281.4 669.7L1281.8 699.8L1282.2 672.2L1282.6 701.8L1283.0 667.9L1283.4 704.4L1283.8 670.7L1284.2 702.0L1284.6 662.0L1285.0 698.6L1285.4 670.6L1285.8 700.5L1286.2 662.4L1286.6 703.4L1287.0 669.0L1287.4 703.2L1287.8 670.9L1288.2 702.4L1288.6 667.8L1289.0 701.7L1289.4 668.3L1289.8 697.2L1290.2 657.6L1290.6 701.1L1291.0 667.4L1291.4 696.8L1291.8 669.5L1292.2 700.0L1292.6 665.3L1293.0 700.3L1293.4 664.3L1293.8 700.0L1294.2 656.4L1294.6 703.3L1295.0 659.4L1295.4 699.0L1295.8 659.2L1296.2 701.4L1296.6 666.4L1297.0 699.9L1297.4 703.0L1297.8 670.5L1298.2 703.3L1298.6 662.1L1299.0 701.8L1299.4 661.5L1299.8 700.8L1300.2 657.3L1300.6 701.0L1301.0 670.2L1301.4 700.7L1301.8 658.5L1302.2 701.0L1302.6 663.5L1303.0 701.3L1303.4 657.9L1303.8 701.3L1304.2 663.2L1304.6 700.3L1305.0 665.6L1305.4 697.4L1305.8 664.0L1306.2 702.9L1306.6 665.2L1307.0 701.0L1307.4 666.7L1307.8 701.4L1308.2 667.8L1308.6 701.1L1309.0 665.8L1309.4 697.6L1309.8 668.9L1310.2 700.8L1310.6 673.0L1311.0 700.1L1311.4 661.8L1311.8 702.3L1312.2 702.9L1312.6 672.2L1313.0 703.5L1313.4 670.4L1313.8 702.7L1314.2 670.9L1314.6 702.9L1315.0 668.9L1315.4 700.4L1315.8 669.6L1316.2 704.5L1316.6 671.5L1317.0 703.6L1317.4 669.9L1317.8 704.5L1318.2 668.2L1318.6 704.5L1319.0 664.6L1319.4 703.4L1319.8 667.0L1320.2 695.2L1320.6 665.9L1321.0 704.5L1321.4 673.6L1321.8 704.2L1322.2 670.2L1322.6 699.7L1323.0 668.6L1323.4 661.1L1323.8 701.3L1324.2 668.1L1324.6 702.7L1325.0 659.4L1325.4 702.5L1325.8 674.3L1326.2 701.3L1326.6 669.6L1327.0 704.5L1327.4 663.8L1327.8 704.5L1328.2 676.9L1328.6 704.5L1329.0 664.5L1329.4 703.6L1329.8 665.8L1330.2 702.5L1330.6 660.9L1331.0 703.3L1331.4 661.9L1331.8 701.3L1332.2 704.5L1332.6 669.9L1333.0 704.5L1333.4 637.4L1333.8 613.4L1334.0 604.0L1334.2 618.6L1334.6 642.6L1335.0 704.5L1335.4 673.8L1335.8 704.5L1336.2 672.4L1336.6 704.5L1337.0 670.4L1337.4 704.0L1337.8 672.4L1338.2 701.4L1338.6 667.0L1339.0 668.7L1339.4 704.5L1339.8 673.3L1340.2 703.2L1340.6 662.3L1341.0 702.9L1341.4 665.7L1341.8 700.1L1342.2 671.7L1342.6 704.5L1343.0 665.1L1343.4 699.7L1343.8 673.6L1344.2 701.0L1344.6 664.7L1345.0 702.6L1345.4 671.8L1345.8 701.9L1346.2 655.7L1346.6 697.3L1347.0 665.6L1347.4 701.8L1347.8 673.4L1348.2 697.3L1348.6 668.1L1349.0 699.9L1349.4 664.4L1349.8 699.6L1350.2 666.6L1350.6 702.1L1351.0 663.2L1351.4 703.5L1351.8 664.6L1352.2 701.4L1352.6 669.8L1353.0 701.8L1353.4 659.9L1353.8 702.6L1354.2 671.3L1354.6 704.5L1355.0 670.5L1355.4 704.4L1355.8 665.3L1356.2 701.6L1356.6 670.0L1357.0 700.2L1357.4 669.2L1357.8 700.7L1358.2 669.8L1358.6 704.5L1359.0 669.1L1359.4 703.2L1359.8 667.0L1360.2 699.7L1360.6 664.5L1361.0 698.2L1361.4 673.9L1361.8 700.9L1362.2 670.4L1362.6 704.5L1363.0 670.9L1363.4 701.5L1363.8 669.5L1364.2 704.5L1364.6 668.0L1365.0 704.5L1365.4 672.1L1365.8 704.5L1366.2 672.8L1366.6 704.5L1367.0 663.4L1367.4 702.3L1367.8 668.3L1368.2 668.0L1368.6 700.8L1369.0 658.6L1369.4 703.5L1369.8 670.4L1370.2 704.5L1370.6 667.7L1371.0 704.0L1371.4 668.4L1371.8 701.1L1372.2 668.7L1372.6 699.2L1373.0 662.3L1373.4 703.4L1373.8 668.1L1374.2 704.5L1374.6 665.1L1375.0 703.3L1375.4 660.0L1375.8 703.1L1376.2 666.3L1376.6 702.3L1377.0 662.0L1377.4 700.1L1377.8 662.7L1378.2 698.3L1378.6 668.5L1379.0 704.3L1379.4 666.5L1379.8 702.0L1380.2 671.0L1380.6 704.5L1381.0 658.3L1381.4 703.2L1381.8 668.6L1382.2 702.1L1382.6 666.7L1383.0 700.6L1383.4 673.2L1383.8 701.4L1384.2 672.6L1384.6 703.1L1385.0 663.6L1385.4 704.5L1385.8 676.7L1386.2 703.1L1386.6 671.6L1387.0 704.3L1387.4 666.5L1387.8 702.4L1388.2 671.1L1388.6 703.8L1389.0 668.7L1389.4 700.7L1389.8 668.0L1390.2 701.9L1390.6 674.1L1391.0 704.0L1391.4 671.4L1391.8 704.1L1392.2 667.2L1392.6 700.4L1393.0 670.7L1393.4 703.0L1393.8 666.5L1394.2 702.5L1394.6 671.3L1395.0 704.5L1395.4 672.1L1395.8 704.3L1396.2 671.8L1396.6 703.7L1397.0 672.8L1397.4 702.6L1397.8 657.7L1398.2 701.6L1398.6 654.9L1399.0 702.0L1399.4 662.3L1399.8 699.6L1400.2 667.4L1400.6 697.4L1401.0 665.5L1401.4 701.7L1401.8 670.6L1402.2 695.6L1402.6 662.1L1403.0 700.1L1403.4 663.2L1403.8 700.8L1404.2 670.9L1404.6 671.0L1405.0 702.1L1405.4 669.9L1405.8 699.5L1406.2 660.5L1406.6 704.5L1407.0 672.2L1407.4 703.6L1407.8 672.9L1408.2 703.6L1408.6 704.5L1409.0 676.0L1409.4 704.0L1409.8 665.9L1410.2 700.8L1410.6 665.1L1411.0 701.0L1411.4 671.8L1411.8 700.6L1412.2 672.4L1412.6 704.5" stroke="#f82820" stroke-width="1.5" fill="none" stroke-linejoin="round"/>
<path d="M0.0 417.9L0.3 418.1L0.6 418.3L0.9 418.6L1.3 418.9L1.6 419.2L2.1 419.5L2.5 419.9L3.0 420.2L3.4 420.6L3.9 421.0L4.4 421.4L5.0 421.8L5.5 422.2L6.1 422.7L6.6 423.1L7.2 423.5L7.8 424.0L8.4 424.5L9.0 424.9L9.5 425.4L10.1 425.9L10.7 426.3L11.3 426.8L11.9 427.3L12.4 427.7L13.0 428.2L13.5 428.6L14.0 429.1L14.6 429.5L15.1 429.9L15.5 430.3L16.0 430.7L16.6 431.2L17.1 431.7L17.7 432.2L18.3 432.8L18.8 433.3L19.3 433.8L19.9 434.4L20.4 434.9L20.9 435.4L21.5 436.0L22.0 436.5L22.5 437.0L23.0 437.6L23.5 438.1L24.0 438.6L24.5 439.1L25.0 439.5L25.5 440.0L25.9 440.5L26.4 440.9L26.9 441.3L27.3 441.7L27.8 442.0L28.3 442.4L28.7 442.7L29.3 443.1L29.8 443.4L30.3 443.7L30.8 444.0L31.3 444.2L31.8 444.4L32.3 444.6L32.7 444.7L33.2 444.8L33.6 445.0L34.1 445.1L34.5 445.1L35.0 445.2L35.5 445.3L36.0 445.4L36.5 445.5L37.1 445.6L37.7 445.7L38.3 445.8L38.7 445.9L39.2 446.0L39.7 446.1L40.1 446.2L40.6 446.4L41.1 446.5L41.6 446.7L42.2 446.8L42.7 447.0L43.2 447.1L43.8 447.3L44.3 447.4L44.9 447.6L45.4 447.7L46.0 447.8L46.5 447.9L47.1 448.0L47.6 448.1L48.1 448.1L48.7 448.1L49.2 448.2L49.7 448.1L50.3 448.1L50.8 448.0L51.3 447.9L51.8 447.8L52.2 447.6L52.7 447.4L53.3 447.1L53.8 446.7L54.4 446.3L54.9 445.8L55.4 445.3L55.9 444.7L56.4 444.1L56.8 443.5L57.3 442.8L57.8 442.1L58.2 441.4L58.7 440.6L59.2 439.9L59.7 439.1L60.1 438.3L60.6 437.6L61.1 436.8L61.6 436.0L62.1 435.3L62.7 434.5L63.2 433.8L63.8 433.1L64.3 432.5L64.7 431.9L65.2 431.3L65.7 430.7L66.2 430.0L66.7 429.3L67.2 428.6L67.8 427.9L68.3 427.2L68.8 426.5L69.4 425.8L69.9 425.0L70.5 424.3L71.0 423.6L71.5 423.0L72.1 422.3L72.6 421.6L73.2 421.0L73.7 420.4L74.2 419.8L74.7 419.3L75.3 418.8L75.8 418.4L76.3 417.9L76.8 417.6L77.3 417.3L77.7 417.0L78.2 416.8L78.8 416.6L79.3 416.5L79.9 416.4L80.5 416.3L81.0 416.4L81.5 416.4L82.1 416.5L82.6 416.7L83.1 416.9L83.6 417.1L84.1 417.4L84.6 417.8L85.1 418.2L85.6 418.6L86.1 419.1L86.6 419.6L87.0 420.1L87.5 420.7L88.0 421.4L88.5 422.0L88.9 422.8L89.4 423.5L89.9 424.5L90.5 425.5L91.0 426.7L91.5 428.0L92.0 429.3L92.5 430.7L93.0 432.2L93.4 433.8L93.9 435.3L94.4 436.9L94.9 438.5L95.4 440.1L95.8 441.8L96.3 443.3L96.8 444.9L97.3 446.4L97.8 447.9L98.4 449.3L98.9 450.6L99.4 451.7L99.9 452.9L100.4 454.0L100.9 455.2L101.4 456.4L101.9 457.6L102.4 458.8L102.9 459.9L103.5 461.1L104.0 462.2L104.5 463.3L105.1 464.4L105.6 465.5L106.1 466.5L106.6 467.4L107.2 468.3L107.7 469.1L108.1 469.9L108.6 470.6L109.1 471.2L109.6 471.8L110.0 472.2L110.6 472.6L111.1 472.8L111.7 472.8L112.2 472.6L112.7 472.3L113.2 471.8L113.6 471.3L114.1 470.7L114.5 470.1L115.0 469.5L115.5 469.0L116.0 468.6L116.4 468.2L116.9 468.0L117.5 468.0L118.0 468.2L118.5 468.5L118.9 469.0L119.4 469.6L119.9 470.3L120.4 471.0L120.9 471.9L121.4 472.8L121.9 473.7L122.4 474.7L122.9 475.6L123.4 476.6L124.0 477.5L124.5 478.4L125.0 479.2L125.5 479.9L126.1 480.5L126.6 481.1L127.2 481.5L127.7 481.7L128.2 481.8L128.7 481.8L129.2 481.7L129.7 481.6L130.2 481.4L130.7 481.1L131.2 480.8L131.7 480.4L132.2 480.0L132.7 479.6L133.3 479.1L133.8 478.6L134.3 478.1L134.8 477.6L135.3 477.2L135.8 476.7L136.4 476.3L136.9 475.8L137.4 475.5L137.8 475.1L138.3 474.8L138.8 474.6L139.3 474.4L139.8 474.3L140.3 474.3L140.8 474.3L141.3 474.4L141.8 474.5L142.2 474.7L142.7 474.8L143.2 474.9L143.6 475.1L144.1 475.1L144.6 475.2L145.1 475.2L145.6 475.1L146.1 474.9L146.6 474.6L147.2 474.2L147.8 473.7L148.4 473.0L148.8 472.4L149.3 471.8L149.8 471.0L150.3 470.2L150.8 469.3L151.3 468.3L151.8 467.2L152.3 466.1L152.9 464.9L153.4 463.8L154.0 462.6L154.5 461.3L155.1 460.1L155.7 458.9L156.2 457.6L156.8 456.4L157.3 455.2L157.9 454.1L158.4 453.0L159.0 452.0L159.5 451.0L160.0 450.1L160.5 449.2L161.0 448.5L161.5 447.8L161.9 447.3L162.4 446.9L162.8 446.6L163.5 446.4L164.1 446.4L164.7 446.7L165.3 447.2L165.9 447.9L166.4 448.8L167.0 449.7L167.5 450.8L168.0 452.0L168.5 453.1L168.9 454.3L169.4 455.5L169.8 456.7L170.3 457.7L170.7 458.7L171.1 459.5L171.5 460.2L172.2 461.2L172.9 461.9L173.4 462.5L174.0 463.0L174.5 463.5L175.0 464.0L175.4 464.6L175.9 465.3L176.4 466.2L176.9 467.6L177.5 469.3L178.0 471.2L178.5 473.1L178.9 475.0L179.4 476.7L179.9 478.1L180.4 479.0L180.9 479.4L181.4 479.2L181.9 478.8L182.4 478.1L182.8 477.4L183.4 476.8L183.9 476.5L184.4 476.6L184.9 477.0L185.4 477.6L185.9 478.3L186.4 479.1L187.0 480.0L187.5 481.1L188.0 482.2L188.6 483.4L189.1 484.6L189.6 486.1L190.2 487.9L190.7 489.9L191.2 492.0L191.8 494.1L192.3 495.9L192.8 497.4L193.4 498.5L193.9 498.9L194.4 498.8L195.0 498.3L195.5 497.4L196.0 496.2L196.5 494.8L197.0 493.0L197.6 490.9L198.1 488.7L198.7 486.2L199.2 483.9L199.6 481.2L200.1 478.3L200.6 475.1L201.1 471.8L201.6 468.5L202.1 465.1L202.6 461.7L203.2 458.5L203.7 455.5L204.3 452.7L204.8 450.6L205.3 448.5L205.8 446.4L206.3 444.3L206.9 442.2L207.4 440.2L207.9 438.3L208.5 436.5L209.0 434.8L209.6 433.2L210.1 431.8L210.6 430.5L211.1 429.5L211.5 428.7L212.1 428.1L212.7 428.2L213.1 428.8L213.6 429.8L214.0 430.9L214.5 432.1L215.0 433.0L215.6 433.5L216.3 433.5L216.7 433.2L217.2 432.7L217.6 432.1L218.1 431.4L218.7 430.5L219.2 429.6L219.8 428.6L220.3 427.6L220.9 426.7L221.4 425.7L222.0 424.8L222.5 423.9L223.1 423.1L223.6 422.5L224.1 422.0L224.6 421.6L225.0 421.5L225.6 421.6L226.2 421.9L226.8 422.4L227.3 423.2L227.8 424.1L228.3 425.2L228.8 426.4L229.2 427.7L229.7 429.1L230.1 430.5L230.6 431.9L231.2 433.6L231.7 435.3L232.3 437.0L232.8 438.9L233.3 440.9L233.8 443.3L234.3 446.0L234.9 449.1L235.4 452.7L235.9 457.2L236.5 462.6L237.1 468.6L237.6 475.1L238.2 481.5L238.7 487.8L239.2 493.5L239.7 498.3L240.2 502.1L240.8 505.9L241.3 508.1L241.7 509.1L242.2 509.3L242.7 509.0L243.4 508.5L243.8 508.1L244.2 507.5L244.7 506.6L245.2 505.6L245.7 504.4L246.2 503.1L246.7 501.9L247.3 500.6L247.9 499.4L248.5 498.2L249.1 497.3L249.8 496.5L250.2 496.1L250.7 495.8L251.1 495.6L251.6 495.4L252.0 495.2L252.5 495.1L253.0 495.1L253.5 495.0L254.0 494.9L254.5 494.9L255.0 494.8L255.6 494.7L256.1 494.5L256.6 494.4L257.2 494.1L257.7 493.8L258.3 493.5L258.8 493.0L259.4 492.5L259.9 492.0L260.4 491.3L260.9 490.6L261.4 489.9L261.9 489.0L262.4 488.1L263.0 487.2L263.5 486.2L264.0 485.3L264.6 484.3L265.1 483.3L265.7 482.2L266.2 481.3L266.8 480.3L267.3 479.4L267.8 478.5L268.4 477.6L268.9 476.9L269.4 476.1L269.9 475.5L270.4 475.0L270.8 474.5L271.3 474.2L271.9 473.9L272.5 473.6L273.1 473.5L273.6 473.4L274.2 473.5L274.7 473.6L275.3 473.8L275.8 474.1L276.3 474.4L276.8 474.9L277.3 475.4L277.8 476.0L278.3 476.6L278.7 477.3L279.2 478.1L279.7 478.9L280.1 479.8L280.7 481.3L281.3 483.2L281.9 485.4L282.4 487.7L283.0 490.3L283.5 492.9L284.0 495.4L284.5 497.9L285.0 500.2L285.5 502.3L285.9 504.1L286.4 505.5L287.0 506.7L287.6 507.2L288.1 507.3L288.6 507.0L289.1 506.7L289.7 506.4L290.2 506.4L290.7 506.9L291.2 507.9L291.7 509.9L292.3 512.8L292.8 516.4L293.3 520.2L293.9 523.9L294.4 527.1L294.9 529.6L295.5 531.1L296.0 531.0L296.5 529.3L297.0 526.1L297.5 521.8L298.0 516.8L298.6 511.3L299.1 505.8L299.6 500.4L300.1 495.7L300.7 491.9L301.2 489.3L301.7 486.7L302.2 484.2L302.7 481.9L303.2 479.7L303.7 477.8L304.2 476.1L304.7 474.7L305.3 473.7L305.8 473.0L306.3 472.8L306.8 473.1L307.3 473.9L307.9 475.1L308.4 476.8L308.9 478.7L309.5 480.8L310.0 483.1L310.5 485.4L311.0 487.7L311.5 489.9L311.9 491.9L312.5 494.7L313.0 497.6L313.4 500.6L313.9 503.7L314.4 506.7L314.8 509.7L315.3 512.5L315.9 515.0L316.3 516.7L316.8 518.3L317.3 519.8L317.8 521.3L318.3 522.7L318.8 524.0L319.3 525.3L319.9 526.6L321.5 530.2L323.6 533.9L325.8 537.7L327.9 541.4L329.5 540.9L331.1 540.3L332.7 539.8L335.0 551.0L337.4 562.1L339.3 558.9L341.1 555.7L343.0 552.5L344.9 542.9L346.7 533.4L348.6 523.8L350.6 526.2L352.6 528.6L354.5 519.3L356.3 510.0L358.2 500.7L360.1 514.3L361.9 527.8L363.8 541.4L365.7 542.7L367.5 544.1L369.4 545.4L371.8 531.0L374.1 525.0L376.5 519.0L378.4 525.4L380.2 531.8L382.1 538.2L384.2 533.9L386.4 529.7L388.5 525.4L390.4 536.0L392.2 546.7L394.1 557.3L396.5 554.1L398.9 551.0L400.9 560.2L402.9 569.3L404.8 565.1L406.7 561.1L408.6 557.0L410.5 552.7L412.4 548.6L414.0 549.1L415.6 550.1L417.2 550.6L418.8 552.2L420.4 552.5L422.0 557.7L423.6 562.2L425.2 566.6L426.8 571.7L428.4 575.1L430.0 577.4L431.6 580.0L433.6 572.9L435.6 564.5L437.8 569.0L440.0 572.1L442.1 568.9L444.3 565.5L446.4 562.5L448.3 560.1L450.1 557.0L452.0 554.6L453.6 559.5L455.2 565.7L456.8 572.1L459.9 553.0L461.5 563.6L463.1 572.1L466.3 550.6L469.5 561.0L471.6 562.4L473.8 565.5L475.9 570.5L477.5 559.1L479.1 546.6L481.0 557.3L482.8 570.2L484.7 581.7L486.5 574.0L488.3 565.8L490.1 561.4L491.9 551.4L495.0 564.1L496.9 546.6L498.7 531.8L500.6 516.3L502.5 529.0L504.3 545.8L506.2 559.4L508.2 529.3L510.2 501.9L511.8 520.2L513.4 541.7L515.0 559.4L517.1 556.1L519.3 555.5L521.4 553.0L523.0 557.8L524.6 554.6L526.2 559.4L528.2 531.9L530.2 508.6L532.2 486.0L535.3 538.6L537.0 567.7L538.6 593.0L541.3 575.8L543.6 585.2L546.0 593.0L547.8 584.5L549.5 578.5L551.3 573.0L552.9 575.7L554.6 582.7L556.2 584.8L557.9 593.0L559.9 589.1L561.9 582.5L563.5 580.5L565.1 576.1L566.7 569.7L568.3 566.5L569.9 558.5L571.9 562.4L573.9 573.0L576.2 584.2L578.5 598.4L580.3 596.0L582.1 589.0L584.0 580.8L585.8 575.8L587.8 589.1L589.8 597.0L591.8 606.4L594.1 613.9L596.4 617.0L598.1 611.2L599.8 606.2L601.4 603.6L603.1 599.7L604.8 599.2L606.4 602.9L608.1 608.9L609.7 607.7L611.0 613.9L611.8 609.1L612.5 613.3L613.2 616.8L614.0 621.1L614.8 616.5L615.5 620.0L616.2 616.7L617.0 621.2L617.8 611.4L618.5 615.3L619.2 601.4L620.0 607.6L620.8 604.3L621.5 618.6L622.2 608.2L623.0 622.1L623.8 611.9L624.5 615.6L625.2 598.3L626.0 618.3L626.8 612.9L627.5 618.3L628.2 617.5L629.0 627.7L629.8 614.0L630.5 624.3L631.2 613.0L632.0 622.8L632.8 620.6L633.5 617.6L634.2 615.9L635.0 620.6L635.8 621.8L636.5 622.6L637.2 622.4L638.0 620.6L638.8 622.5L639.5 623.0L640.2 624.3L641.0 620.0L641.8 612.0L642.5 613.2L643.2 609.5L644.0 628.5L644.8 616.3L645.5 621.3L646.2 614.7L647.0 621.8L647.8 619.9L648.5 621.6L649.2 609.7L650.0 621.1L650.8 609.2L651.5 623.1L652.2 620.2L653.0 629.7L653.8 619.2L654.5 630.5L655.2 622.1L656.0 631.2L656.8 620.3L657.5 624.4L658.2 621.3L659.0 636.0L659.8 635.7L660.5 643.6L661.2 636.7L662.0 641.7L662.8 641.4L663.5 645.1L664.2 645.4L665.0 645.8L665.8 646.2L666.5 639.0L667.2 634.6L668.0 642.6L668.8 634.7L669.5 636.9L670.2 628.1L671.0 643.7L671.8 631.9L672.5 647.4L673.2 644.8L674.0 642.4L674.8 640.3L675.5 644.0L676.2 637.3L677.0 640.7L677.8 638.1L678.5 652.0L679.2 640.5L680.0 644.3L680.8 640.5L681.5 645.8L682.2 641.7L683.0 648.9L683.8 634.7L684.5 641.5L685.2 640.3L686.0 644.7L686.8 638.8L687.5 648.8L688.2 646.6L689.0 646.9L689.8 642.4L690.5 643.8L691.2 646.4L692.0 652.7L692.8 644.8L693.5 649.3L694.2 640.8L695.0 652.8L695.8 646.5L696.5 650.2L697.2 648.7L698.0 654.9L698.8 647.3L699.5 653.4L700.2 652.1L701.0 662.9L701.8 649.8L702.5 657.8L703.2 661.8L704.0 668.7L704.8 658.3L705.5 657.2L706.2 652.7L707.0 655.1L707.8 643.7L708.5 645.9L709.2 648.1L710.0 654.8L710.8 647.5L711.5 658.5L712.2 646.8L713.0 649.7L713.8 645.7L714.5 658.0L715.2 648.6L716.0 658.4L716.8 653.2L717.5 657.7L718.2 660.9L719.0 656.8L719.8 651.3L720.5 652.8L721.2 646.4L722.0 649.9L722.8 644.3L723.5 649.6L724.2 650.5L725.0 655.2L725.8 647.0L726.5 674.7L727.2 662.6L728.0 665.7L728.8 641.9L729.5 663.6L730.2 653.0L731.0 675.5L731.8 664.3L732.5 675.6L733.2 661.6L734.0 661.9L734.8 641.5L735.5 652.0L736.2 641.3L737.0 656.1L737.8 648.2L738.5 655.6L739.2 644.0L740.0 642.4L740.8 642.8L741.5 659.9L742.2 647.3L743.0 659.6L743.8 636.9L744.5 652.1L745.2 639.8L746.0 655.0L746.8 631.3L747.5 638.4L748.2 637.7L749.0 630.4L749.8 633.1L750.5 630.1L751.2 635.9L752.0 652.2L752.8 645.5L753.5 649.4L754.2 643.1L755.0 651.7L755.8 631.1L756.5 639.7L757.2 637.9L758.0 641.8L758.8 641.3L759.5 649.0L760.2 643.8L761.0 654.4L761.8 640.0L762.5 655.4L763.2 637.9L764.0 649.1L764.8 634.1L765.5 645.0L766.2 648.0L767.0 663.8L767.8 651.5L768.5 665.1L769.2 652.9L770.0 653.9L770.8 640.0L771.5 644.4L772.0 662.7L773.3 643.8L774.7 663.9L776.0 641.5L777.3 666.0L778.7 668.3L780.0 648.0L781.3 669.8L782.7 651.9L784.0 661.3L785.3 643.9L786.6 652.5L787.9 647.9L789.3 643.3L790.6 641.3L791.9 646.2L793.2 651.4L794.5 656.7L795.8 656.3L797.1 668.2L798.4 674.4L799.7 651.6L801.0 594.0L801.0 595.1L802.3 678.6L803.6 654.2L804.9 678.0L806.2 652.4L807.5 682.7L808.8 636.2L810.1 681.8L811.4 652.2L812.7 683.4L814.0 646.5L815.3 675.7L816.6 642.9L817.9 667.7L819.2 644.1L820.5 673.0L821.8 644.8L823.1 681.5L824.4 647.8L825.7 647.9L827.0 678.7L828.3 649.6L829.6 648.7L830.9 678.2L832.2 652.7L833.5 648.0L834.8 679.3L836.1 649.7L837.4 653.4L838.7 680.1L840.0 652.0L841.3 681.1L842.6 655.8L843.9 689.8L845.2 682.1L846.5 656.8L847.8 686.8L849.1 689.1L850.4 658.0L851.7 690.0L853.0 658.1L854.3 657.7L855.6 687.3L856.9 661.4L858.2 688.2L859.5 662.9L860.8 661.3L862.1 685.8L863.4 649.8L864.7 688.6L866.0 663.3L867.3 676.7L868.6 663.4L869.9 664.7L871.2 660.8L872.5 671.4L873.8 668.0L875.1 683.6L876.4 666.2L877.7 690.2L879.0 662.0L880.3 681.5L881.6 683.3L882.9 660.9L884.2 681.8L885.5 662.8L886.8 677.9L888.1 667.6L889.4 685.9L890.7 663.5L892.0 666.8L893.3 687.1L894.6 666.5L895.9 686.9L897.2 662.8L898.5 668.0L899.8 686.2L901.1 660.5L902.4 682.2L903.7 657.1L905.0 678.7L906.3 683.2L907.6 664.2L908.9 686.1L910.2 670.5L911.5 688.0L912.8 690.8L914.1 663.7L915.4 688.9L916.7 668.4L918.0 693.0L919.3 672.6L920.6 664.0L921.9 684.4L923.2 662.8L924.5 689.2L925.8 665.1L927.1 686.4L928.4 667.7L929.7 672.0L931.0 688.4L932.3 682.8L933.6 666.4L934.9 672.5L936.2 666.7L937.5 684.4L938.8 666.8L940.1 687.7L941.4 693.1L942.7 678.1L944.0 700.2L945.3 680.4L946.6 674.5L947.9 704.5L949.2 671.2L950.5 704.5L951.8 682.2L953.1 704.5L954.4 690.3L955.7 704.5L957.0 683.4L958.3 704.5L959.6 677.3L960.9 701.8L962.2 691.6L963.4 703.1L964.7 682.8L965.9 704.2L967.2 687.7L968.4 704.5L969.7 689.1L970.9 702.4L972.2 688.2L973.4 703.9L974.7 678.8L975.9 703.7L977.2 691.1L978.4 703.8L979.7 691.8L980.9 702.7L982.2 677.3L983.4 703.9L984.7 676.0L985.9 702.1L987.2 677.6L988.4 703.3L989.7 693.0L990.9 703.0L992.2 690.5L993.4 703.7L994.7 676.2L995.9 703.7L997.2 692.3L998.4 703.9L999.7 694.7L1000.9 702.9L1002.2 677.7L1003.4 703.6L1004.7 680.6L1005.9 701.8L1007.2 693.2L1008.4 694.2L1009.7 693.8L1010.9 683.8L1012.2 673.8L1013.4 680.2L1014.7 690.2L1015.9 700.2L1017.2 683.0L1018.4 701.7L1019.7 691.5L1020.9 703.2L1022.2 685.7L1023.4 702.4L1024.7 687.6L1025.9 703.2L1027.2 686.6L1028.4 702.2L1029.7 680.2L1030.9 702.6L1032.2 678.2L1033.4 703.3L1034.7 680.7L1035.9 703.5L1037.2 686.9L1038.4 703.5L1039.7 687.8L1040.9 703.5L1042.2 689.3L1043.4 702.4L1044.7 693.1L1045.9 703.4L1047.2 691.8L1048.4 703.7L1049.7 685.9L1050.9 703.7L1052.2 692.4L1053.4 703.9L1054.7 693.7L1055.9 701.6L1057.2 688.9L1058.4 702.2L1059.7 682.3L1060.9 703.6L1062.2 688.3L1063.4 701.1L1064.7 689.1L1065.9 687.0L1067.2 678.3L1068.4 682.5L1069.7 687.2L1070.9 700.0L1072.2 692.2L1073.4 702.6L1074.7 696.7L1075.9 703.8L1077.2 681.3L1078.4 702.6L1079.7 692.3L1080.9 701.4L1082.2 679.7L1083.4 701.5L1084.7 688.8L1085.9 702.8L1087.2 696.3L1088.4 701.6L1089.7 683.6L1090.9 702.8L1092.2 688.7L1093.4 702.9L1094.7 687.0L1095.9 703.2L1097.2 697.6L1098.4 703.0L1099.7 680.5L1100.9 703.8L1102.2 681.6L1103.4 702.6L1104.7 694.3L1105.9 703.9L1107.2 692.0L1108.4 695.8L1109.7 685.8L1110.9 684.2L1112.2 693.4L1113.4 693.2L1114.7 702.8L1115.9 692.9L1117.2 701.8L1118.4 692.6L1119.7 689.1L1120.9 703.6L1122.2 688.7L1123.4 702.9L1124.7 695.3L1125.9 703.3L1127.2 683.3L1128.4 703.7L1129.7 688.4L1130.9 703.7L1132.2 689.0L1133.4 702.6L1134.7 694.9L1135.9 702.0L1137.2 687.2L1138.4 703.1L1139.7 693.9L1140.9 703.1L1142.2 690.6L1143.4 696.5L1144.7 688.2L1145.9 688.1L1147.2 696.5L1148.4 699.6L1149.7 703.6L1150.9 702.7L1152.2 698.7L1153.4 703.4L1154.7 697.5L1155.9 702.0L1157.2 693.1L1158.4 703.3L1159.7 699.6L1160.9 704.0L1162.2 686.8L1163.4 703.5L1164.7 699.7L1165.9 701.1L1167.2 690.8L1168.4 691.3L1169.7 703.0L1170.9 695.1L1172.2 703.6L1173.4 686.5L1174.7 701.0L1175.9 699.5L1177.2 702.6L1178.4 694.1L1179.7 700.7L1180.9 688.5L1182.2 703.3L1183.4 694.9L1184.7 703.7L1185.9 697.9L1187.2 703.8L1188.4 697.6L1189.7 703.0L1190.9 687.7L1192.2 690.5L1193.4 703.3L1194.7 694.9L1195.9 702.6L1197.2 695.2L1198.4 703.2L1199.7 692.2L1200.9 701.3L1202.2 695.5L1203.4 701.0L1204.7 699.6L1205.9 701.2L1207.2 704.0L1208.4 700.5L1209.7 702.9L1210.9 694.6L1212.2 702.5L1213.4 698.8L1214.7 702.9L1215.9 691.4L1217.2 702.1L1218.4 698.4L1219.7 701.9L1220.9 691.4L1222.2 703.8L1223.4 701.9L1224.7 694.7L1225.9 703.3L1227.2 693.5L1228.4 703.5L1229.7 698.9L1230.9 701.3L1232.2 694.6L1233.4 703.1L1234.7 699.3L1235.9 702.0L1237.2 691.3L1238.4 703.8L1239.7 697.8L1240.9 703.7L1242.2 696.8L1243.4 702.9L1244.7 692.8L1245.9 703.9L1247.2 701.0L1248.4 702.9L1249.7 696.3L1250.9 703.0L1252.2 691.8L1253.4 703.4L1254.7 701.0L1255.9 703.3L1257.2 697.8L1258.4 702.6L1259.7 698.9L1260.9 703.7L1262.2 698.0L1263.4 703.6L1264.7 694.6L1265.9 703.7L1267.2 699.6L1268.4 703.7L1269.7 697.8L1270.9 703.0L1272.2 694.0L1273.4 702.2L1274.7 693.0L1275.9 703.7L1277.2 694.3L1278.4 703.6L1279.7 695.4L1280.9 702.6L1282.2 696.4L1283.4 702.1L1284.7 701.8L1285.9 699.2L1287.2 703.2L1288.4 697.9L1289.7 703.1L1290.9 695.7L1292.2 702.9L1293.4 693.0L1294.7 703.5L1295.9 693.8L1297.2 703.3L1298.4 700.0L1299.7 703.2L1300.9 700.1L1302.2 703.3L1303.4 695.7L1304.7 703.4L1305.9 696.1L1307.2 701.3L1308.4 700.8L1309.7 702.7L1310.9 701.0L1312.2 703.8L1313.4 694.4L1314.7 702.7L1315.9 698.5L1317.2 701.2L1318.4 695.4L1319.7 703.6L1320.9 692.8L1322.2 701.8L1323.4 701.4L1324.7 703.1L1325.9 696.3L1327.2 703.6L1328.4 701.4L1329.7 703.8L1330.9 699.9L1332.2 703.8L1333.4 699.1L1334.7 701.5L1335.9 696.9L1337.2 702.4L1338.4 696.2L1339.7 701.8L1340.9 697.2L1342.2 702.2L1343.4 693.1L1344.7 702.1L1345.9 696.8L1347.2 702.2L1348.4 694.0L1349.7 702.2L1350.9 694.4L1352.2 702.5L1353.4 693.8L1354.7 700.4L1355.9 699.8L1357.2 702.5L1358.4 702.7L1359.7 694.4L1360.9 701.6L1362.2 696.9L1363.4 703.5L1364.7 694.9L1365.9 702.5L1367.2 693.2L1368.4 703.2L1369.7 701.1L1370.9 701.7L1372.2 694.3L1373.4 701.5L1374.7 692.8L1375.9 701.0L1377.2 699.1L1378.4 703.3L1379.7 698.3L1380.9 699.2L1382.2 700.5L1383.4 702.6L1384.7 693.2L1385.9 703.5L1387.2 696.0L1388.4 702.9L1389.7 694.3L1390.9 702.8L1392.2 701.1L1393.4 702.9L1394.7 700.8L1395.9 703.7L1397.2 695.9L1398.4 703.6L1399.7 699.4L1400.9 702.6L1402.2 694.3L1403.4 703.3L1404.7 693.7L1405.9 702.7L1407.2 694.8L1408.4 701.8L1409.7 693.7L1410.9 703.5L1412.2 694.2" stroke="#f0f030" stroke-width="1.5" fill="none" stroke-linejoin="round"/>
<path d="M0.0 409.1L0.3 409.3L0.6 409.4L0.9 409.6L1.3 409.8L1.6 410.0L2.1 410.2L2.5 410.5L3.0 410.7L3.4 411.0L3.9 411.2L4.4 411.5L5.0 411.8L5.5 412.1L6.1 412.4L6.6 412.7L7.2 413.0L7.8 413.3L8.4 413.7L9.0 414.0L9.5 414.3L10.1 414.7L10.7 415.0L11.3 415.4L11.9 415.7L12.4 416.1L13.0 416.5L13.5 416.8L14.0 417.2L14.6 417.6L15.1 418.0L15.5 418.3L16.0 418.7L16.6 419.2L17.1 419.7L17.7 420.2L18.2 420.7L18.8 421.3L19.3 421.8L19.8 422.4L20.4 423.0L20.9 423.6L21.4 424.2L21.9 424.7L22.4 425.3L22.9 426.0L23.4 426.6L23.9 427.2L24.4 427.8L24.9 428.4L25.3 429.0L25.8 429.6L26.3 430.2L26.8 430.7L27.3 431.3L27.7 431.9L28.2 432.5L28.7 433.0L29.2 433.6L29.8 434.3L30.3 434.9L30.8 435.6L31.4 436.3L31.9 436.9L32.4 437.6L33.0 438.3L33.5 438.9L34.0 439.6L34.5 440.2L35.0 440.9L35.5 441.5L36.0 442.1L36.5 442.7L37.0 443.2L37.5 443.7L38.0 444.2L38.5 444.7L38.9 445.1L39.4 445.5L39.9 445.8L40.4 446.2L41.0 446.5L41.5 446.8L41.9 447.1L42.4 447.4L42.9 447.6L43.4 447.9L43.8 448.0L44.3 448.2L44.7 448.3L45.2 448.3L45.7 448.3L46.2 448.3L46.7 448.2L47.2 448.0L47.7 447.8L48.3 447.4L48.9 447.1L49.5 446.6L49.9 446.2L50.4 445.8L50.8 445.3L51.3 444.8L51.8 444.3L52.3 443.7L52.7 443.0L53.2 442.3L53.7 441.6L54.3 440.9L54.8 440.2L55.3 439.4L55.8 438.6L56.4 437.8L56.9 437.0L57.4 436.1L58.0 435.3L58.5 434.5L59.0 433.6L59.6 432.8L60.1 432.0L60.6 431.2L61.2 430.4L61.7 429.6L62.2 428.8L62.8 428.1L63.3 427.4L63.8 426.7L64.3 426.0L64.8 425.3L65.4 424.6L65.9 423.9L66.4 423.2L66.9 422.4L67.5 421.7L68.0 420.9L68.5 420.2L69.1 419.4L69.6 418.7L70.1 417.9L70.7 417.2L71.2 416.5L71.7 415.8L72.2 415.1L72.8 414.5L73.3 413.8L73.8 413.2L74.3 412.6L74.8 412.1L75.3 411.6L75.8 411.1L76.3 410.7L76.8 410.3L77.3 410.0L77.7 409.7L78.2 409.5L78.8 409.3L79.3 409.1L79.9 409.0L80.5 409.0L81.0 409.0L81.5 409.0L82.1 409.1L82.6 409.3L83.1 409.5L83.6 409.7L84.1 410.0L84.6 410.4L85.1 410.7L85.6 411.1L86.1 411.6L86.6 412.1L87.0 412.6L87.5 413.1L88.0 413.7L88.5 414.3L88.9 414.9L89.4 415.5L89.9 416.3L90.5 417.1L91.0 418.0L91.5 419.0L92.0 420.0L92.5 421.1L93.0 422.2L93.4 423.4L93.9 424.6L94.4 425.8L94.9 427.1L95.4 428.4L95.8 429.7L96.3 431.0L96.8 432.4L97.3 433.7L97.8 435.1L98.4 436.5L98.9 437.9L99.4 439.1L99.9 440.5L100.4 441.9L100.9 443.3L101.4 444.9L101.9 446.4L102.4 448.0L102.9 449.6L103.5 451.2L104.0 452.8L104.5 454.4L105.1 456.0L105.6 457.6L106.1 459.1L106.6 460.5L107.2 461.9L107.7 463.2L108.1 464.4L108.6 465.5L109.1 466.6L109.6 467.4L110.0 468.2L110.6 469.0L111.1 469.6L111.7 469.9L112.2 470.1L112.7 470.1L113.2 469.9L113.6 469.7L114.1 469.4L114.5 469.1L115.0 468.7L115.5 468.4L116.0 468.1L116.4 467.9L116.9 467.9L117.5 467.9L118.0 468.2L118.5 468.6L118.9 469.0L119.4 469.5L119.9 470.2L120.4 470.8L120.9 471.6L121.4 472.3L121.9 473.1L122.4 473.9L122.9 474.7L123.4 475.5L124.0 476.2L124.5 476.9L125.0 477.5L125.5 478.1L126.1 478.6L126.6 479.0L127.2 479.2L127.7 479.4L128.2 479.4L128.7 479.4L129.2 479.2L129.7 479.0L130.3 478.7L130.8 478.4L131.3 478.0L131.9 477.5L132.5 477.1L133.0 476.6L133.6 476.1L134.1 475.5L134.6 475.0L135.2 474.5L135.7 474.0L136.2 473.5L136.7 473.0L137.1 472.6L137.6 472.2L138.0 471.9L138.4 471.6L138.8 471.4L139.6 471.2L140.2 471.4L140.7 471.8L141.1 472.4L141.5 472.9L141.9 473.3L142.3 473.4L142.9 473.0L143.6 472.2L144.0 471.6L144.4 470.8L144.8 469.9L145.3 468.9L145.8 467.9L146.3 466.7L146.8 465.5L147.3 464.2L147.8 462.8L148.4 461.5L148.9 460.1L149.5 458.8L150.0 457.4L150.6 456.1L151.1 454.9L151.6 453.7L152.2 452.6L152.7 451.5L153.2 450.6L153.7 449.7L154.2 448.9L154.8 448.0L155.3 447.2L155.8 446.4L156.3 445.7L156.9 444.9L157.4 444.2L157.9 443.5L158.5 442.9L159.0 442.2L159.5 441.7L160.0 441.2L160.5 440.7L161.0 440.2L161.5 439.9L161.9 439.6L162.4 439.3L162.8 439.1L163.4 438.9L164.0 438.9L164.6 439.0L165.1 439.2L165.6 439.6L166.1 440.0L166.6 440.6L167.0 441.2L167.5 441.9L168.0 442.6L168.6 443.5L169.1 444.3L169.6 445.1L170.1 446.1L170.6 447.2L171.1 448.4L171.7 449.7L172.2 451.0L172.7 452.4L173.3 453.7L173.8 455.0L174.4 456.2L174.9 457.3L175.4 458.3L175.9 459.1L176.4 459.8L177.0 460.3L177.5 460.6L178.1 460.7L178.6 460.7L179.1 460.5L179.7 460.3L180.2 460.1L180.7 459.8L181.2 459.7L181.7 459.6L182.3 459.6L182.8 459.8L183.3 460.1L183.9 460.4L184.4 460.8L184.9 461.2L185.5 461.6L186.0 462.1L186.5 462.7L187.1 463.3L187.6 464.1L188.1 464.9L188.6 465.9L189.1 467.0L189.6 468.5L190.2 470.5L190.7 472.8L191.2 475.2L191.7 477.8L192.2 480.3L192.8 482.6L193.2 484.6L193.7 486.3L194.2 487.4L194.7 487.8L195.3 487.5L195.8 486.4L196.4 484.7L196.9 482.4L197.4 479.9L197.9 477.1L198.4 474.2L199.0 471.3L199.5 468.6L200.0 465.9L200.5 462.9L201.0 459.8L201.5 456.6L202.0 453.3L202.5 450.1L203.1 447.0L203.7 444.1L204.3 441.5L204.7 439.9L205.2 438.3L205.7 436.7L206.2 435.1L206.8 433.6L207.3 432.1L207.9 430.7L208.4 429.4L208.9 428.1L209.5 427.0L210.0 426.0L210.5 425.2L211.0 424.4L211.5 423.9L212.1 423.6L212.6 423.7L213.1 424.1L213.6 424.8L214.0 425.6L214.5 426.5L215.0 427.4L215.5 428.2L216.0 428.7L216.5 428.9L217.1 428.7L217.6 428.2L218.0 427.6L218.6 426.7L219.1 425.6L219.6 424.4L220.2 423.1L220.7 421.8L221.3 420.5L221.8 419.2L222.4 418.0L222.9 416.9L223.5 415.9L224.0 415.2L224.5 414.7L225.0 414.4L225.6 414.4L226.2 414.6L226.8 415.1L227.3 415.8L227.9 416.7L228.4 417.7L229.0 418.8L229.5 420.0L230.0 421.3L230.5 422.7L231.0 424.1L231.4 425.5L232.0 427.6L232.6 429.6L233.0 431.8L233.5 434.2L233.9 436.9L234.4 440.0L234.9 443.7L235.4 447.9L235.9 452.6L236.4 458.2L237.0 464.5L237.6 471.2L238.1 477.9L238.7 484.3L239.2 490.2L239.7 495.1L240.2 498.9L240.8 502.4L241.2 504.2L241.6 504.6L242.0 504.3L242.6 503.5L243.4 502.9L243.8 502.7L244.2 502.4L244.6 501.9L245.1 501.4L245.6 500.8L246.1 500.2L246.7 499.5L247.2 498.8L247.8 498.1L248.3 497.4L248.9 496.7L249.4 496.0L249.9 495.4L250.4 494.9L250.9 494.5L251.4 494.1L252.0 493.8L252.5 493.7L253.0 493.8L253.5 493.9L254.0 494.2L254.5 494.4L255.0 494.6L255.5 494.7L256.0 494.7L256.6 494.4L257.2 494.0L257.8 493.3L258.2 492.7L258.7 491.9L259.2 491.0L259.7 490.0L260.2 489.0L260.7 487.8L261.2 486.6L261.8 485.3L262.3 484.0L262.9 482.8L263.4 481.5L264.0 480.2L264.5 479.0L265.0 477.8L265.5 476.7L266.0 475.7L266.4 474.8L266.9 474.0L267.3 473.4L267.9 472.5L268.5 471.9L269.1 471.5L269.6 471.2L270.0 471.1L270.5 471.1L270.9 471.1L271.4 471.3L271.8 471.5L272.3 471.6L272.9 471.8L273.4 471.9L273.8 472.0L274.3 472.2L274.8 472.4L275.3 472.5L275.8 472.8L276.3 473.0L276.8 473.4L277.3 473.7L277.8 474.2L278.4 474.7L278.9 475.2L279.5 475.9L280.1 476.6L280.6 477.2L281.0 477.8L281.5 478.5L282.0 479.3L282.5 480.1L283.1 480.9L283.6 481.7L284.1 482.6L284.7 483.5L285.2 484.5L285.8 485.4L286.3 486.4L286.8 487.4L287.3 488.4L287.8 489.4L288.3 490.4L288.8 491.5L289.2 492.5L289.6 493.5L290.3 495.5L290.9 497.9L291.4 500.7L291.9 503.5L292.4 506.4L292.9 509.1L293.3 511.4L293.8 513.4L294.2 514.7L294.7 515.3L295.2 515.0L295.7 513.6L296.2 511.3L296.7 508.1L297.2 504.3L297.7 500.1L298.2 495.6L298.7 491.0L299.2 486.6L299.7 482.5L300.2 478.9L300.7 476.0L301.2 473.5L301.7 471.2L302.2 469.0L302.8 467.0L303.3 465.2L303.8 463.6L304.3 462.3L304.8 461.2L305.3 460.5L305.8 460.0L306.3 460.0L306.9 460.5L307.4 461.7L308.0 463.4L308.5 465.5L309.1 468.0L309.6 470.7L310.1 473.5L310.6 476.4L311.1 479.1L311.6 482.3L312.1 485.9L312.6 489.7L313.1 493.6L313.6 497.5L314.1 501.3L314.6 504.8L315.1 507.9L315.6 510.4L316.1 512.8L316.6 515.1L317.2 517.2L317.7 519.2L318.3 521.0L318.8 522.7L319.4 524.1L319.9 525.4L321.5 526.5L323.1 527.5L324.7 528.6L326.3 531.0L327.9 533.4L329.5 535.8L331.1 538.2L333.5 541.4L335.8 544.6L337.4 547.2L339.0 549.9L340.6 552.5L343.0 537.4L345.4 522.2L347.0 520.2L348.6 518.2L351.0 519.4L353.4 520.6L355.0 510.2L356.6 499.9L358.2 489.5L359.8 493.5L361.4 497.5L363.0 501.5L366.2 527.8L367.8 527.5L369.4 527.3L371.0 527.0L372.8 523.5L374.7 520.1L376.5 516.6L378.1 524.3L379.7 532.1L381.3 539.8L383.1 536.0L384.9 532.2L386.7 528.4L388.5 524.6L390.1 529.7L391.7 534.7L393.3 539.8L395.2 537.1L397.0 534.5L398.9 531.8L400.7 535.6L402.4 539.5L404.2 543.4L405.9 547.3L407.7 551.0L410.0 547.7L412.4 544.6L414.0 543.2L415.6 541.4L417.2 539.8L419.1 543.4L420.9 546.6L422.8 549.4L424.7 553.6L426.5 558.4L428.4 563.7L430.0 567.0L431.6 572.0L433.2 574.9L435.6 551.0L437.2 554.2L438.9 557.9L440.5 561.0L442.6 561.3L444.8 562.5L446.4 558.0L448.0 553.2L449.6 549.0L451.5 549.4L453.3 550.8L455.2 551.4L457.1 546.9L459.1 541.8L461.0 542.6L462.8 541.3L464.7 540.2L466.3 543.3L467.9 544.7L469.5 545.0L471.5 550.9L473.5 553.0L475.5 547.3L477.5 540.2L479.5 539.6L481.5 541.8L484.7 557.8L486.3 552.3L487.9 545.6L489.5 538.2L491.1 529.0L493.1 542.1L495.0 554.6L496.6 540.3L498.2 522.2L499.8 508.3L501.8 522.9L503.8 533.8L506.2 548.2L508.0 523.5L509.9 497.9L512.0 517.8L514.2 540.2L516.2 539.9L518.2 545.0L520.2 544.1L522.2 538.6L524.2 545.1L526.2 545.0L528.6 538.6L530.4 508.2L532.2 483.6L534.1 510.4L536.0 533.0L538.0 564.0L540.3 559.6L542.6 556.5L544.6 564.3L546.6 577.0L549.0 570.3L551.3 566.5L553.6 566.4L555.9 562.5L558.2 573.1L560.6 578.5L562.4 566.0L564.1 560.7L565.9 550.6L567.5 542.1L569.2 540.0L570.9 548.8L572.5 554.5L575.2 571.8L577.5 576.0L579.8 582.5L581.8 581.2L583.8 577.9L585.8 570.5L587.8 582.5L589.8 594.4L591.6 602.3L593.3 601.9L595.1 607.7L596.8 600.1L598.5 599.0L600.1 590.4L601.8 589.0L603.8 582.3L605.7 579.8L607.7 589.1L609.7 599.7L611.0 600.1L611.8 590.7L612.5 599.0L613.2 603.1L614.0 609.7L614.8 610.0L615.5 582.0L615.9 562.0L616.2 579.5L617.0 611.0L617.8 589.4L618.5 611.1L619.2 578.4L620.0 591.4L620.8 594.9L621.2 578.0L621.5 593.0L622.2 595.4L623.0 604.4L623.8 593.2L624.5 603.1L625.2 585.3L626.0 609.5L626.8 591.0L627.5 605.7L628.2 603.3L629.0 616.3L629.8 589.8L630.5 607.7L631.2 603.6L632.0 614.3L632.8 588.3L633.5 606.9L634.2 582.1L635.0 603.2L635.8 605.4L636.5 607.8L637.2 602.1L638.0 610.3L638.8 606.7L639.5 614.1L640.2 601.4L641.0 612.2L641.8 582.1L642.5 603.4L643.2 604.2L643.8 578.0L644.0 588.0L644.8 604.6L645.5 605.6L646.2 601.2L647.0 612.0L647.8 586.6L648.5 604.4L649.2 596.1L650.0 603.7L650.8 588.5L651.5 607.3L652.2 609.9L653.0 611.2L653.8 606.2L654.5 611.7L655.2 607.0L656.0 617.9L656.8 602.8L657.5 612.8L658.2 607.1L659.0 624.9L659.8 625.2L660.5 629.2L661.2 628.6L662.0 628.8L662.8 631.2L663.5 632.5L664.2 632.8L665.0 633.2L665.8 627.0L666.5 623.7L667.2 617.5L668.0 630.7L668.8 609.6L669.0 598.0L669.5 618.3L670.2 606.6L671.0 624.0L671.8 600.2L672.5 633.2L673.2 637.3L674.0 632.3L674.8 626.1L675.5 627.4L676.2 617.7L677.0 625.0L677.8 616.1L678.5 633.9L679.2 625.1L680.0 633.5L680.8 620.7L681.5 630.1L682.2 606.5L683.0 633.9L683.8 612.2L684.5 620.3L685.2 622.6L686.0 627.3L686.8 613.0L687.5 634.1L688.2 621.0L689.0 629.8L689.8 619.6L690.5 624.4L691.2 630.4L692.0 638.3L692.8 622.8L693.5 630.0L694.2 623.0L695.0 638.4L695.8 629.9L696.5 635.6L697.2 635.6L698.0 641.5L698.8 628.8L699.5 639.8L700.2 633.3L701.0 644.5L701.8 636.6L702.5 639.4L703.2 642.1L704.0 653.0L704.8 641.0L705.5 641.8L706.2 633.3L707.0 634.0L707.8 626.7L708.5 630.0L709.2 633.1L710.0 641.6L710.8 630.6L711.5 638.9L712.2 620.7L713.0 632.0L713.8 625.7L714.5 637.2L715.2 628.5L716.0 641.8L716.8 636.6L717.5 641.1L718.2 638.4L719.0 630.2L719.8 632.5L720.5 634.3L721.2 611.3L722.0 627.1L722.8 620.1L723.5 634.1L724.2 624.2L725.0 631.9L725.8 629.4L726.5 645.3L727.2 628.0L728.0 640.2L728.8 617.2L729.5 635.6L730.2 615.6L731.0 643.0L731.8 634.2L732.5 644.1L733.2 614.5L734.0 635.7L734.8 618.8L735.5 628.8L736.2 615.2L737.0 624.9L737.8 623.0L738.5 628.1L739.2 611.8L740.0 611.9L740.8 612.3L741.5 623.3L742.2 611.5L743.0 633.5L743.8 609.8L744.5 621.2L745.2 609.3L746.0 623.9L746.8 599.5L747.5 609.5L748.2 595.6L749.0 595.9L749.8 587.9L750.5 590.9L751.2 588.5L752.0 617.7L752.8 611.7L753.5 616.8L754.2 599.6L755.0 608.2L755.8 586.1L756.5 593.9L757.2 582.3L758.0 590.7L758.8 591.2L759.5 606.6L760.2 590.6L761.0 608.3L761.8 579.6L762.5 605.8L763.2 571.5L764.0 594.8L764.8 570.6L765.5 596.9L766.2 595.6L767.0 609.9L767.8 595.1L768.5 615.1L769.2 598.1L770.0 609.2L770.8 580.0L771.5 592.2L772.0 630.6L773.3 573.4L774.7 616.3L776.0 574.0L777.3 611.0L778.7 599.3L780.0 560.3L781.3 586.3L782.7 555.3L784.0 577.8L785.3 517.4L786.6 483.1L787.9 448.8L789.3 414.6L790.2 390.0L790.6 399.6L791.9 433.7L793.2 467.8L794.5 501.9L795.8 535.9L797.1 549.2L798.4 565.8L799.7 558.3L801.0 592.1L802.3 587.2L803.6 615.5L804.9 576.5L806.2 591.2L807.5 584.5L808.8 623.8L810.1 593.6L811.4 612.9L812.7 602.2L814.0 618.4L815.3 605.1L816.6 636.3L817.9 599.3L819.2 639.6L820.5 602.9L821.8 607.5L823.1 670.7L824.4 659.2L825.7 607.4L827.0 657.4L828.3 594.3L829.6 659.2L830.9 610.3L832.2 666.3L833.5 672.5L834.8 665.4L836.1 608.3L837.4 668.7L838.7 612.6L840.0 668.7L841.3 617.4L842.6 680.4L843.9 626.8L845.2 675.3L846.5 678.9L847.8 608.4L849.1 671.6L850.4 674.8L851.7 668.3L853.0 614.7L854.3 671.7L855.6 612.4L856.9 603.9L857.2 590.0L858.2 663.4L859.5 610.8L860.8 583.9L861.0 575.0L862.1 661.7L863.4 602.5L864.7 558.0L864.7 559.1L866.0 631.9L867.3 613.7L868.6 595.5L869.9 561.1L870.5 538.0L871.2 566.9L872.5 597.5L873.8 615.7L875.1 633.9L876.4 621.5L877.7 670.3L879.0 638.4L880.3 680.0L881.6 637.3L882.9 633.1L884.2 680.5L885.5 646.0L886.8 684.1L888.1 682.3L889.4 640.3L890.7 673.2L892.0 642.6L893.3 641.0L894.6 644.0L895.9 685.2L897.2 644.3L898.5 685.0L899.8 645.6L901.1 683.3L902.4 646.5L903.7 682.7L905.0 642.7L906.3 638.5L907.6 674.9L908.9 641.7L910.2 685.4L911.5 635.8L912.0 620.0L912.8 645.3L914.1 650.0L915.4 692.2L916.7 641.3L918.0 680.8L919.3 642.6L920.6 683.5L921.9 643.7L923.2 647.1L924.5 689.7L925.2 588.0L925.8 678.7L927.1 643.9L928.4 678.6L929.7 641.6L931.0 672.9L931.4 641.2L932.3 666.8L933.1 626.6L933.6 658.2L934.8 547.0L934.8 549.7L936.1 615.1L937.2 657.0L937.3 643.1L938.1 651.0L938.5 640.9L939.7 674.3L940.9 644.3L942.1 690.3L943.3 650.6L944.4 682.9L945.6 694.8L946.7 656.4L947.8 693.1L948.9 650.3L950.0 689.0L951.1 653.2L952.1 691.5L953.2 646.0L954.2 690.7L955.2 656.9L956.3 697.1L957.3 657.6L958.3 694.5L959.2 659.1" stroke="#f82820" stroke-opacity="0.55" stroke-width="1.5" fill="none" stroke-linejoin="round"/>
<path d="M790.5 80V728M871.5 80V728" stroke="#e08838" stroke-width="1.4"/>
<path d="M73 398H86L79.5 409Z" fill="none" stroke="#f4f020" stroke-width="1.3"/>
<path d="M784.5 384H796.5L790.5 396Z" fill="none" stroke="#ff3020" stroke-width="1.3"/>
<text x="720" y="656" font-family="Liberation Mono, monospace" font-size="19" fill="#e8e890" transform="matrix(1 0 0 0.88 0 78.72)">&#8211;112.5</text>
<text x="875" y="662" font-family="Liberation Mono, monospace" font-size="19" fill="#e8e890" transform="matrix(1 0 0 0.88 0 79.44)">&#8211;113.4</text>
<text x="730" y="394" font-family="Liberation Mono, monospace" font-size="19" fill="#f03828" transform="matrix(1 0 0 0.88 0 47.28)">&#8211;59.8</text>
<text x="875" y="530" font-family="Liberation Mono, monospace" font-size="19" fill="#f03828" transform="matrix(1 0 0 0.88 0 63.60)">&#8211;86.9</text>
<text x="731" y="702" font-family="Liberation Mono, monospace" font-size="19" fill="#e07828" transform="matrix(1 0 0 0.88 0 84.24)">945.6</text>
<text x="875" y="702" font-family="Liberation Mono, monospace" font-size="19" fill="#e07828" transform="matrix(1 0 0 0.88 0 84.24)">1436.6</text>
<text x="1297" y="99" font-family="Liberation Mono, monospace" font-size="16" fill="#e8e840" text-anchor="end" transform="matrix(1 0 0 0.88 0 11.88)">23.4 Hz</text>
<text x="1422" y="99" font-family="Liberation Mono, monospace" font-size="16" fill="#e8e840" text-anchor="end" transform="matrix(1 0 0 0.88 0 11.88)">&#8211;62.6 dB</text>
<text x="1297" y="115" font-family="Liberation Mono, monospace" font-size="16" fill="#e83830" text-anchor="end" transform="matrix(1 0 0 0.88 0 13.80)">945.6 Hz</text>
<text x="1422" y="115" font-family="Liberation Mono, monospace" font-size="16" fill="#e83830" text-anchor="end" transform="matrix(1 0 0 0.88 0 13.80)">&#8211;59.8 dB</text>
<text x="1422" y="133" font-family="Liberation Mono, monospace" font-size="19" fill="#f0f0f0" text-anchor="end" transform="matrix(1 0 0 0.88 0 15.96)">Delta</text>
<text x="1422" y="152" font-family="Liberation Mono, monospace" font-size="19" fill="#e8e840" text-anchor="end" transform="matrix(1 0 0 0.88 0 18.24)">&#8211;0.9 dB</text>
<text x="1422" y="171" font-family="Liberation Mono, monospace" font-size="19" fill="#e83830" text-anchor="end" transform="matrix(1 0 0 0.88 0 20.52)">&#8211;27.1 dB</text>
<text x="1422" y="190" font-family="Liberation Mono, monospace" font-size="19" fill="#f0f0f0" text-anchor="end" transform="matrix(1 0 0 0.88 0 22.80)">491.1 Hz</text>
</svg>
<div class="abs" style="left:1px;top:728px;width:1424px;height:23px;background:#f0f0f0"></div>
<div class="abs" style="left:1px;top:728px;width:1424px;height:3px;background:#fff"></div>
<div class="abs" style="left:1px;top:750px;width:1424px;height:1px;background:#fff"></div>
<svg class="abs" style="left:1406px;top:734px" width="19" height="17"><path d="M5 15.5L17.5 3M10 15.5L17.5 8M15 15.5L17.5 13" stroke="#9a9a9a" stroke-width="1.2"/></svg>
<div class="abs" style="left:1px;top:731px;width:100px;height:20px;border-top:1px solid #a0a0a0;border-left:1px solid #a0a0a0"></div>
<div class="t" style="left:9px;top:734px;font-size:11px">In  48000 :1</div>
<div class="abs" style="left:103px;top:731px;width:98px;height:20px;border-top:1px solid #a0a0a0;border-left:1px solid #a0a0a0"></div>
<div class="t" style="left:111px;top:734px;font-size:11px">Out 48000 :2</div>
<div class="abs" style="left:202px;top:731px;width:99px;height:20px;border-top:1px solid #a0a0a0;border-left:1px solid #a0a0a0"></div>
<div class="abs" style="left:303px;top:731px;width:1003px;height:20px;border-top:1px solid #a0a0a0;border-left:1px solid #a0a0a0"></div>
<div class="t" style="left:314px;top:734px;font-size:11px">2285.66 Hz   1.88 dB</div>
<div class="abs" style="left:1309px;top:731px;width:116px;height:20px;border-top:1px solid #a0a0a0;border-left:1px solid #a0a0a0"></div>
<div class="t" style="left:1318px;top:734px;font-size:11px">CPU 0%  1:6</div>
</body></html>
